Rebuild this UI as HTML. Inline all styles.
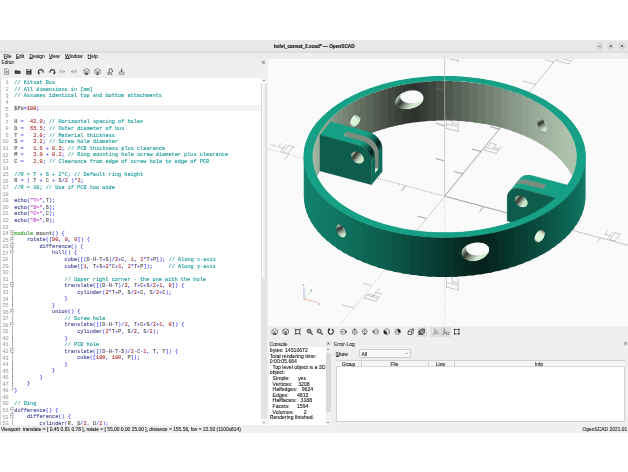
<!DOCTYPE html><html><head><meta charset="utf-8"><style>
*{margin:0;padding:0}
body{width:628px;height:472px;position:relative;overflow:hidden;background:#fff;font-family:"Liberation Sans",sans-serif}
.a{position:absolute}
.ui{margin-top:0.9px;font-size:4.9px;color:#161616;white-space:pre;position:absolute;line-height:6px;-webkit-text-stroke:0.09px #161616}
.ln{position:absolute;left:0;width:8.6px;text-align:right;font:5.8px "Liberation Mono",monospace;color:#9a9a9a;line-height:6.55px;margin-top:0.4px;letter-spacing:-0.25px;transform-origin:0 50%}
.code{position:absolute;left:14.3px;font:5.24px "Liberation Mono",monospace;white-space:pre;line-height:6.55px;color:#505050;-webkit-text-stroke:0.12px currentColor;transform:scaleY(1.13);transform-origin:0 50%}
.con{position:absolute;left:269.8px;font:5.15px "Liberation Sans",sans-serif;white-space:pre;line-height:5.8px;color:#1a1a1a;-webkit-text-stroke:0.1px #1a1a1a}
</style></head><body><div style="position:absolute;left:0;top:0;width:628px;height:472px;will-change:transform">
<div class="a" style="left:0;top:39.85px;width:628px;height:11.05px;background:#e8e8e8"></div>
<div class="a" style="left:0;top:50.9px;width:628px;height:1.9px;background:#dedede"></div>
<div class="ui" style="left:273.7px;top:43px;font-weight:bold;font-size:4.75px;color:#2a2a2a;-webkit-text-stroke:0.22px #2a2a2a">holvi_cansat_2.scad* — OpenSCAD</div>
<div class="a" style="left:596.1px;top:42.3px;width:7.4px;height:7.4px;border-radius:50%;background:#d9d9d9"></div>
<div class="a" style="left:607.1px;top:42.3px;width:7.4px;height:7.4px;border-radius:50%;background:#d9d9d9"></div>
<div class="a" style="left:618.4px;top:42.3px;width:7.4px;height:7.4px;border-radius:50%;background:#d9d9d9"></div>
<svg class="a" style="left:596px;top:42px" width="30" height="8" viewBox="0 0 30 8"><path d="M2.6,4.3h2.4" stroke="#606060" stroke-width="0.7"/><path d="M14.8,2.9l1.3,1.3l-1.3,1.3l-1.3-1.3z" fill="#5a5a5a"/><path d="M25.1,3.1l2,2M27.1,3.1l-2,2" stroke="#505050" stroke-width="0.8"/></svg>
<div class="a" style="left:0;top:52.8px;width:628px;height:380.2px;background:#efefef"></div>
<div class="a" style="left:0;top:52.8px;width:628px;height:6.3px;background:#ededed"></div>
<div class="ui" style="left:3.5px;top:52.8px">File</div>
<div class="a" style="left:3.5px;top:58.3px;width:3.0px;height:0.45px;background:#444"></div>
<div class="ui" style="left:15.8px;top:52.8px">Edit</div>
<div class="a" style="left:15.8px;top:58.3px;width:3.3px;height:0.45px;background:#444"></div>
<div class="ui" style="left:29.4px;top:52.8px">Design</div>
<div class="a" style="left:29.4px;top:58.3px;width:3.5px;height:0.45px;background:#444"></div>
<div class="ui" style="left:49.0px;top:52.8px">View</div>
<div class="a" style="left:49.0px;top:58.3px;width:3.3px;height:0.45px;background:#444"></div>
<div class="ui" style="left:65.1px;top:52.8px">Window</div>
<div class="a" style="left:65.1px;top:58.3px;width:4.6px;height:0.45px;background:#444"></div>
<div class="ui" style="left:87.6px;top:52.8px">Help</div>
<div class="a" style="left:87.6px;top:58.3px;width:3.5px;height:0.45px;background:#444"></div>
<div class="ui" style="left:1.4px;top:59.6px;color:#444">Editor</div>
<svg class="a" style="left:3.00px;top:68.30px" width="7.20" height="7.20" viewBox="0 0 10 10"><path d="M2.2,1.2h4l1.8,1.8v5.8h-5.8z" fill="none" stroke="#777" stroke-width="1"/><path d="M4,5.5h2.5M5.25,4.2v2.6" stroke="#444" stroke-width="1"/></svg><svg class="a" style="left:13.50px;top:68.30px" width="7.20" height="7.20" viewBox="0 0 10 10"><path d="M1,3h3l0.8,0.9h4v4.6h-7.8z" fill="#2e2e2e"/><path d="M2.5,5h7l-1.2,3.5h-7z" fill="#4a4a4a"/></svg><svg class="a" style="left:24.70px;top:68.30px" width="7.20" height="7.20" viewBox="0 0 10 10"><path d="M1.8,1.8h6.4l0.8,0.8v6.6h-7.2z" fill="#303030"/><rect x="3.2" y="2" width="3.6" height="2.2" fill="#ddd"/><rect x="3" y="6" width="4" height="3" fill="#777"/></svg><svg class="a" style="left:37.40px;top:68.30px" width="7.20" height="7.20" viewBox="0 0 10 10"><path d="M2.5,7.5 A3.4,3.4 0 1 1 8.6,6.6" fill="none" stroke="#2e2e2e" stroke-width="1.5"/><path d="M0.6,6.3l2.2,2.6l2.1-2.4z" fill="#2e2e2e"/></svg><svg class="a" style="left:48.60px;top:68.30px" width="7.20" height="7.20" viewBox="0 0 10 10"><path d="M7.5,7.5 A3.4,3.4 0 1 0 1.4,6.6" fill="none" stroke="#2e2e2e" stroke-width="1.5"/><path d="M9.4,6.3l-2.2,2.6l-2.1-2.4z" fill="#2e2e2e"/></svg><svg class="a" style="left:59.20px;top:68.30px" width="7.20" height="7.20" viewBox="0 0 10 10"><path d="M0.8,3.2h4M0.8,5h4M0.8,6.8h4" stroke="#9a9a9a" stroke-width="0.9"/><path d="M6,2.8l3,2.2l-3,2.2z" fill="#9a9a9a"/></svg><svg class="a" style="left:70.30px;top:68.30px" width="7.20" height="7.20" viewBox="0 0 10 10"><path d="M5.2,3.2h4M5.2,5h4M5.2,6.8h4" stroke="#9a9a9a" stroke-width="0.9"/><path d="M4,2.8l-3,2.2l3,2.2z" fill="#9a9a9a"/></svg><svg class="a" style="left:83.30px;top:68.30px" width="7.20" height="7.20" viewBox="0 0 10 10"><path d="M5,0.8l3.8,2.1v4.2l-3.8,2.1l-3.8-2.1v-4.2z" fill="none" stroke="#6a6a6a" stroke-width="0.9"/><path d="M1.2,2.9l3.8,2.1l3.8-2.1M5,5v4.2" fill="none" stroke="#6a6a6a" stroke-width="0.8"/><path d="M2.6,6.4l2,1.6l-2,1.6M5,6.4l2,1.6l-2,1.6" fill="none" stroke="#1e1e1e" stroke-width="1.1"/></svg><svg class="a" style="left:94.00px;top:68.30px" width="7.20" height="7.20" viewBox="0 0 10 10"><path d="M5,0.8l3.8,2.1v4.2l-3.8,2.1l-3.8-2.1v-4.2z" fill="none" stroke="#6a6a6a" stroke-width="0.9"/><path d="M1.2,2.9l3.8,2.1l3.8-2.1M5,5v4.2" fill="none" stroke="#6a6a6a" stroke-width="0.8"/><path d="M3.5,6h3l-3,3.4h3z" fill="none" stroke="#333" stroke-width="0.8"/></svg><svg class="a" style="left:107.10px;top:68.30px" width="7.20" height="7.20" viewBox="0 0 10 10"><path d="M3,5.5V3.2A2.2,2.2 0 0 1 7.4,3.2V5.5" fill="none" stroke="#2e2e2e" stroke-width="1"/><path d="M6.6,4.6l0.8,1.2l0.8-1.2" fill="#2e2e2e"/><text x="0.6" y="9.6" font-family="Liberation Sans" font-weight="bold" font-size="3.6" fill="#2e2e2e">STL</text></svg><svg class="a" style="left:117.50px;top:68.30px" width="7.20" height="7.20" viewBox="0 0 10 10"><path d="M5,0.8v4.2" stroke="#2e2e2e" stroke-width="1.1"/><path d="M3.4,3.4l1.6,1.8l1.6-1.8z" fill="#2e2e2e"/><path d="M1.8,5.5h6.4v3.5h-6.4z" fill="none" stroke="#666" stroke-width="0.8"/><path d="M1.8,7h6.4" stroke="#666" stroke-width="0.6"/></svg>
<svg class="a" style="left:261.10px;top:59.90px" width="5" height="5" viewBox="0 0 10 10"><rect x="1" y="1" width="8" height="8" rx="1.5" fill="#d4d4d4"/><path d="M3,3L7,7M7,3L3,7" stroke="#555" stroke-width="1.3"/></svg>
<div class="a" style="left:0;top:78.2px;width:261px;height:346.8px;background:#fff;overflow:hidden">
<div class="a" style="left:0;top:0;width:0.8px;height:347px;background:#d8d8d8"></div>
<div style="position:absolute;left:0;top:-78.2px"><div style="position:absolute;left:14px;top:104.8px;width:247px;height:6px;background:#f3f3f3"></div>
<div class="ln" style="top:80.10px">1</div>
<div class="code" style="top:80.10px"><span style="color:#1e9c9c">// Kitsat Bus</span></div>
<div class="ln" style="top:86.65px">2</div>
<div class="code" style="top:86.65px"><span style="color:#1e9c9c">// All dimensions in [mm]</span></div>
<div class="ln" style="top:93.20px">3</div>
<div class="code" style="top:93.20px"><span style="color:#1e9c9c">// Assumes identical top and bottom attachments</span></div>
<div class="ln" style="top:99.75px">4</div>
<div class="code" style="top:99.75px"></div>
<div class="ln" style="top:106.30px">5</div>
<div class="code" style="top:106.30px"><span style="color:#505050">$fn</span><span style="color:#4b4bff">=</span><span style="color:#b03a3a">100</span><span style="color:#4b4bff">;</span></div>
<div class="ln" style="top:112.85px">6</div>
<div class="code" style="top:112.85px"></div>
<div class="ln" style="top:119.40px">7</div>
<div class="code" style="top:119.40px"><span style="color:#505050">H</span> <span style="color:#4b4bff">=</span>  <span style="color:#b03a3a">42.0</span><span style="color:#4b4bff">;</span> <span style="color:#1e9c9c">// Horizontal spacing of holes</span></div>
<div class="ln" style="top:125.95px">8</div>
<div class="code" style="top:125.95px"><span style="color:#505050">D</span> <span style="color:#4b4bff">=</span>  <span style="color:#b03a3a">65.5</span><span style="color:#4b4bff">;</span> <span style="color:#1e9c9c">// Outer diameter of bus</span></div>
<div class="ln" style="top:132.50px">9</div>
<div class="code" style="top:132.50px"><span style="color:#505050">T</span> <span style="color:#4b4bff">=</span>   <span style="color:#b03a3a">2.0</span><span style="color:#4b4bff">;</span> <span style="color:#1e9c9c">// Material thickness</span></div>
<div class="ln" style="top:139.05px">10</div>
<div class="code" style="top:139.05px"><span style="color:#505050">S</span> <span style="color:#4b4bff">=</span>   <span style="color:#b03a3a">3.2</span><span style="color:#4b4bff">;</span> <span style="color:#1e9c9c">// Screw hole diameter</span></div>
<div class="ln" style="top:145.60px">11</div>
<div class="code" style="top:145.60px"><span style="color:#505050">P</span> <span style="color:#4b4bff">=</span>   <span style="color:#b03a3a">1.6</span> <span style="color:#4b4bff">+</span> <span style="color:#b03a3a">0.3</span><span style="color:#4b4bff">;</span> <span style="color:#1e9c9c">// PCB thickness plus clearance</span></div>
<div class="ln" style="top:152.15px">12</div>
<div class="code" style="top:152.15px"><span style="color:#505050">M</span> <span style="color:#4b4bff">=</span>   <span style="color:#b03a3a">3.0</span> <span style="color:#4b4bff">+</span> <span style="color:#b03a3a">0.2</span><span style="color:#4b4bff">;</span> <span style="color:#1e9c9c">// Ring mounting hole screw diameter plus clearance</span></div>
<div class="ln" style="top:158.70px">13</div>
<div class="code" style="top:158.70px"><span style="color:#505050">C</span> <span style="color:#4b4bff">=</span>   <span style="color:#b03a3a">2.0</span><span style="color:#4b4bff">;</span> <span style="color:#1e9c9c">// Clearance from edge of screw hole to edge of PCB</span></div>
<div class="ln" style="top:165.25px">14</div>
<div class="code" style="top:165.25px"></div>
<div class="ln" style="top:171.80px">15</div>
<div class="code" style="top:171.80px"><span style="color:#1e9c9c">//R = T + S + 2*C; // Default ring height</span></div>
<div class="ln" style="top:178.35px">16</div>
<div class="code" style="top:178.35px"><span style="color:#505050">R</span> <span style="color:#4b4bff">=</span> <span style="color:#4b4bff">(</span> <span style="color:#505050">T</span> <span style="color:#4b4bff">+</span> <span style="color:#505050">C</span> <span style="color:#4b4bff">+</span> <span style="color:#505050">S</span><span style="color:#4b4bff">/</span><span style="color:#b03a3a">2</span> <span style="color:#4b4bff">)</span><span style="color:#4b4bff">*</span><span style="color:#b03a3a">2</span><span style="color:#4b4bff">;</span></div>
<div class="ln" style="top:184.90px">17</div>
<div class="code" style="top:184.90px"><span style="color:#1e9c9c">//R = 10; // Use if PCB too wide</span></div>
<div class="ln" style="top:191.45px">18</div>
<div class="code" style="top:191.45px"></div>
<div class="ln" style="top:198.00px">19</div>
<div class="code" style="top:198.00px"><span style="color:#4b4b9b">echo</span><span style="color:#4b4bff">(</span><span style="color:#c040c0">&quot;T=&quot;</span><span style="color:#4b4bff">,</span><span style="color:#505050">T</span><span style="color:#4b4bff">)</span><span style="color:#4b4bff">;</span></div>
<div class="ln" style="top:204.55px">20</div>
<div class="code" style="top:204.55px"><span style="color:#4b4b9b">echo</span><span style="color:#4b4bff">(</span><span style="color:#c040c0">&quot;S=&quot;</span><span style="color:#4b4bff">,</span><span style="color:#505050">S</span><span style="color:#4b4bff">)</span><span style="color:#4b4bff">;</span></div>
<div class="ln" style="top:211.10px">21</div>
<div class="code" style="top:211.10px"><span style="color:#4b4b9b">echo</span><span style="color:#4b4bff">(</span><span style="color:#c040c0">&quot;C=&quot;</span><span style="color:#4b4bff">,</span><span style="color:#505050">C</span><span style="color:#4b4bff">)</span><span style="color:#4b4bff">;</span></div>
<div class="ln" style="top:217.65px">22</div>
<div class="code" style="top:217.65px"><span style="color:#4b4b9b">echo</span><span style="color:#4b4bff">(</span><span style="color:#c040c0">&quot;R=&quot;</span><span style="color:#4b4bff">,</span><span style="color:#505050">R</span><span style="color:#4b4bff">)</span><span style="color:#4b4bff">;</span></div>
<div class="ln" style="top:224.20px">23</div>
<div class="code" style="top:224.20px"></div>
<div class="ln" style="top:230.75px">24</div>
<div class="code" style="top:230.75px"><span style="color:#3aa33a">module</span> <span style="color:#505050">mount</span><span style="color:#4b4bff">(</span><span style="color:#4b4bff">)</span> <span style="color:#4b4bff">{</span></div>
<div class="ln" style="top:237.30px">25</div>
<div class="code" style="top:237.30px">    <span style="color:#4b4b9b">rotate</span><span style="color:#4b4bff">(</span><span style="color:#4b4bff">[</span><span style="color:#b03a3a">90</span><span style="color:#4b4bff">,</span> <span style="color:#b03a3a">0</span><span style="color:#4b4bff">,</span> <span style="color:#b03a3a">0</span><span style="color:#4b4bff">]</span><span style="color:#4b4bff">)</span> <span style="color:#4b4bff">{</span></div>
<div class="ln" style="top:243.85px">26</div>
<div class="code" style="top:243.85px">        <span style="color:#4b4b9b">difference</span><span style="color:#4b4bff">(</span><span style="color:#4b4bff">)</span> <span style="color:#4b4bff">{</span></div>
<div class="ln" style="top:250.40px">27</div>
<div class="code" style="top:250.40px">            <span style="color:#4b4b9b">hull</span><span style="color:#4b4bff">(</span><span style="color:#4b4bff">)</span> <span style="color:#4b4bff">{</span></div>
<div class="ln" style="top:256.95px">28</div>
<div class="code" style="top:256.95px">                <span style="color:#4b4b9b">cube</span><span style="color:#4b4bff">(</span><span style="color:#4b4bff">[</span><span style="color:#4b4bff">(</span><span style="color:#505050">D</span><span style="color:#4b4bff">-</span><span style="color:#505050">H</span><span style="color:#4b4bff">-</span><span style="color:#505050">T</span><span style="color:#4b4bff">+</span><span style="color:#505050">S</span><span style="color:#4b4bff">)</span><span style="color:#4b4bff">/</span><span style="color:#b03a3a">2</span><span style="color:#4b4bff">+</span><span style="color:#505050">C</span><span style="color:#4b4bff">,</span> <span style="color:#b03a3a">1</span><span style="color:#4b4bff">,</span> <span style="color:#b03a3a">2</span><span style="color:#4b4bff">*</span><span style="color:#505050">T</span><span style="color:#4b4bff">+</span><span style="color:#505050">P</span><span style="color:#4b4bff">]</span><span style="color:#4b4bff">)</span><span style="color:#4b4bff">;</span> <span style="color:#1e9c9c">// Along x-axis</span></div>
<div class="ln" style="top:263.50px">29</div>
<div class="code" style="top:263.50px">                <span style="color:#4b4b9b">cube</span><span style="color:#4b4bff">(</span><span style="color:#4b4bff">[</span><span style="color:#b03a3a">1</span><span style="color:#4b4bff">,</span> <span style="color:#505050">T</span><span style="color:#4b4bff">+</span><span style="color:#505050">S</span><span style="color:#4b4bff">+</span><span style="color:#b03a3a">2</span><span style="color:#4b4bff">*</span><span style="color:#505050">C</span><span style="color:#4b4bff">+</span><span style="color:#b03a3a">1</span><span style="color:#4b4bff">,</span> <span style="color:#b03a3a">2</span><span style="color:#4b4bff">*</span><span style="color:#505050">T</span><span style="color:#4b4bff">+</span><span style="color:#505050">P</span><span style="color:#4b4bff">]</span><span style="color:#4b4bff">)</span><span style="color:#4b4bff">;</span>     <span style="color:#1e9c9c">// Along y-axis</span></div>
<div class="ln" style="top:270.05px">30</div>
<div class="code" style="top:270.05px"></div>
<div class="ln" style="top:276.60px">31</div>
<div class="code" style="top:276.60px">                <span style="color:#1e9c9c">// Upper right corner - the one with the hole</span></div>
<div class="ln" style="top:283.15px">32</div>
<div class="code" style="top:283.15px">                <span style="color:#4b4b9b">translate</span><span style="color:#4b4bff">(</span><span style="color:#4b4bff">[</span><span style="color:#4b4bff">(</span><span style="color:#505050">D</span><span style="color:#4b4bff">-</span><span style="color:#505050">H</span><span style="color:#4b4bff">-</span><span style="color:#505050">T</span><span style="color:#4b4bff">)</span><span style="color:#4b4bff">/</span><span style="color:#b03a3a">2</span><span style="color:#4b4bff">,</span> <span style="color:#505050">T</span><span style="color:#4b4bff">+</span><span style="color:#505050">C</span><span style="color:#4b4bff">+</span><span style="color:#505050">S</span><span style="color:#4b4bff">/</span><span style="color:#b03a3a">2</span><span style="color:#4b4bff">+</span><span style="color:#b03a3a">1</span><span style="color:#4b4bff">,</span> <span style="color:#b03a3a">0</span><span style="color:#4b4bff">]</span><span style="color:#4b4bff">)</span> <span style="color:#4b4bff">{</span></div>
<div class="ln" style="top:289.70px">33</div>
<div class="code" style="top:289.70px">                    <span style="color:#4b4b9b">cylinder</span><span style="color:#4b4bff">(</span><span style="color:#b03a3a">2</span><span style="color:#4b4bff">*</span><span style="color:#505050">T</span><span style="color:#4b4bff">+</span><span style="color:#505050">P</span><span style="color:#4b4bff">,</span> <span style="color:#505050">S</span><span style="color:#4b4bff">/</span><span style="color:#b03a3a">2</span><span style="color:#4b4bff">+</span><span style="color:#505050">C</span><span style="color:#4b4bff">,</span> <span style="color:#505050">S</span><span style="color:#4b4bff">/</span><span style="color:#b03a3a">2</span><span style="color:#4b4bff">+</span><span style="color:#505050">C</span><span style="color:#4b4bff">)</span><span style="color:#4b4bff">;</span></div>
<div class="ln" style="top:296.25px">34</div>
<div class="code" style="top:296.25px">                <span style="color:#4b4bff">}</span></div>
<div class="ln" style="top:302.80px">35</div>
<div class="code" style="top:302.80px">            <span style="color:#4b4bff">}</span></div>
<div class="ln" style="top:309.35px">36</div>
<div class="code" style="top:309.35px">            <span style="color:#4b4b9b">union</span><span style="color:#4b4bff">(</span><span style="color:#4b4bff">)</span> <span style="color:#4b4bff">{</span></div>
<div class="ln" style="top:315.90px">37</div>
<div class="code" style="top:315.90px">                <span style="color:#1e9c9c">// Screw hole</span></div>
<div class="ln" style="top:322.45px">38</div>
<div class="code" style="top:322.45px">                <span style="color:#4b4b9b">translate</span><span style="color:#4b4bff">(</span><span style="color:#4b4bff">[</span><span style="color:#4b4bff">(</span><span style="color:#505050">D</span><span style="color:#4b4bff">-</span><span style="color:#505050">H</span><span style="color:#4b4bff">-</span><span style="color:#505050">T</span><span style="color:#4b4bff">)</span><span style="color:#4b4bff">/</span><span style="color:#b03a3a">2</span><span style="color:#4b4bff">,</span> <span style="color:#505050">T</span><span style="color:#4b4bff">+</span><span style="color:#505050">C</span><span style="color:#4b4bff">+</span><span style="color:#505050">S</span><span style="color:#4b4bff">/</span><span style="color:#b03a3a">2</span><span style="color:#4b4bff">+</span><span style="color:#b03a3a">1</span><span style="color:#4b4bff">,</span> <span style="color:#b03a3a">0</span><span style="color:#4b4bff">]</span><span style="color:#4b4bff">)</span> <span style="color:#4b4bff">{</span></div>
<div class="ln" style="top:329.00px">39</div>
<div class="code" style="top:329.00px">                    <span style="color:#4b4b9b">cylinder</span><span style="color:#4b4bff">(</span><span style="color:#b03a3a">2</span><span style="color:#4b4bff">*</span><span style="color:#505050">T</span><span style="color:#4b4bff">+</span><span style="color:#505050">P</span><span style="color:#4b4bff">,</span> <span style="color:#505050">S</span><span style="color:#4b4bff">/</span><span style="color:#b03a3a">2</span><span style="color:#4b4bff">,</span> <span style="color:#505050">S</span><span style="color:#4b4bff">/</span><span style="color:#b03a3a">2</span><span style="color:#4b4bff">)</span><span style="color:#4b4bff">;</span></div>
<div class="ln" style="top:335.55px">40</div>
<div class="code" style="top:335.55px">                <span style="color:#4b4bff">}</span></div>
<div class="ln" style="top:342.10px">41</div>
<div class="code" style="top:342.10px">                <span style="color:#1e9c9c">// PCB hole</span></div>
<div class="ln" style="top:348.65px">42</div>
<div class="code" style="top:348.65px">                <span style="color:#4b4b9b">translate</span><span style="color:#4b4bff">(</span><span style="color:#4b4bff">[</span><span style="color:#4b4bff">(</span><span style="color:#505050">D</span><span style="color:#4b4bff">-</span><span style="color:#505050">H</span><span style="color:#4b4bff">-</span><span style="color:#505050">T</span><span style="color:#4b4bff">-</span><span style="color:#505050">S</span><span style="color:#4b4bff">)</span><span style="color:#4b4bff">/</span><span style="color:#b03a3a">2</span><span style="color:#4b4bff">-</span><span style="color:#505050">C</span><span style="color:#4b4bff">-</span><span style="color:#b03a3a">1</span><span style="color:#4b4bff">,</span> <span style="color:#505050">T</span><span style="color:#4b4bff">,</span> <span style="color:#505050">T</span><span style="color:#4b4bff">]</span><span style="color:#4b4bff">)</span> <span style="color:#4b4bff">{</span></div>
<div class="ln" style="top:355.20px">43</div>
<div class="code" style="top:355.20px">                    <span style="color:#4b4b9b">cube</span><span style="color:#4b4bff">(</span><span style="color:#4b4bff">[</span><span style="color:#b03a3a">100</span><span style="color:#4b4bff">,</span> <span style="color:#b03a3a">100</span><span style="color:#4b4bff">,</span> <span style="color:#505050">P</span><span style="color:#4b4bff">]</span><span style="color:#4b4bff">)</span><span style="color:#4b4bff">;</span></div>
<div class="ln" style="top:361.75px">44</div>
<div class="code" style="top:361.75px">                <span style="color:#4b4bff">}</span></div>
<div class="ln" style="top:368.30px">45</div>
<div class="code" style="top:368.30px">            <span style="color:#4b4bff">}</span></div>
<div class="ln" style="top:374.85px">46</div>
<div class="code" style="top:374.85px">        <span style="color:#4b4bff">}</span></div>
<div class="ln" style="top:381.40px">47</div>
<div class="code" style="top:381.40px">    <span style="color:#4b4bff">}</span></div>
<div class="ln" style="top:387.95px">48</div>
<div class="code" style="top:387.95px"><span style="color:#4b4bff">}</span></div>
<div class="ln" style="top:394.50px">49</div>
<div class="code" style="top:394.50px"></div>
<div class="ln" style="top:401.05px">50</div>
<div class="code" style="top:401.05px"><span style="color:#1e9c9c">// Ring</span></div>
<div class="ln" style="top:407.60px">51</div>
<div class="code" style="top:407.60px"><span style="color:#4b4b9b">difference</span><span style="color:#4b4bff">(</span><span style="color:#4b4bff">)</span> <span style="color:#4b4bff">{</span></div>
<div class="ln" style="top:414.15px">52</div>
<div class="code" style="top:414.15px">    <span style="color:#4b4b9b">difference</span><span style="color:#4b4bff">(</span><span style="color:#4b4bff">)</span> <span style="color:#4b4bff">{</span></div>
<div class="ln" style="top:420.70px">53</div>
<div class="code" style="top:420.70px">        <span style="color:#4b4b9b">cylinder</span><span style="color:#4b4bff">(</span><span style="color:#505050">R</span><span style="color:#4b4bff">,</span> <span style="color:#505050">D</span><span style="color:#4b4bff">/</span><span style="color:#b03a3a">2</span><span style="color:#4b4bff">,</span> <span style="color:#505050">D</span><span style="color:#4b4bff">/</span><span style="color:#b03a3a">2</span><span style="color:#4b4bff">)</span><span style="color:#4b4bff">;</span></div>
<div style="position:absolute;left:11.5px;top:232.26px;width:0.9px;height:158.10px;background:#b4b4b4"></div>
<div style="position:absolute;left:11.5px;top:409.00px;width:0.9px;height:19.64px;background:#bdbdbd"></div>
<svg style="position:absolute;left:9.7px;top:229.96px" width="4.6" height="4.8" viewBox="0 0 46 48"><rect x="4" y="4" width="38" height="40" rx="7" fill="#fafafa" stroke="#8a8a8a" stroke-width="6"/><path d="M13,24H33" stroke="#6a6a6a" stroke-width="6"/></svg>
<svg style="position:absolute;left:9.7px;top:236.50px" width="4.6" height="4.8" viewBox="0 0 46 48"><rect x="4" y="4" width="38" height="40" rx="7" fill="#fafafa" stroke="#8a8a8a" stroke-width="6"/><path d="M13,24H33" stroke="#6a6a6a" stroke-width="6"/></svg>
<svg style="position:absolute;left:9.7px;top:243.05px" width="4.6" height="4.8" viewBox="0 0 46 48"><rect x="4" y="4" width="38" height="40" rx="7" fill="#fafafa" stroke="#8a8a8a" stroke-width="6"/><path d="M13,24H33" stroke="#6a6a6a" stroke-width="6"/></svg>
<svg style="position:absolute;left:9.7px;top:249.60px" width="4.6" height="4.8" viewBox="0 0 46 48"><rect x="4" y="4" width="38" height="40" rx="7" fill="#fafafa" stroke="#8a8a8a" stroke-width="6"/><path d="M13,24H33" stroke="#6a6a6a" stroke-width="6"/></svg>
<svg style="position:absolute;left:9.7px;top:282.33px" width="4.6" height="4.8" viewBox="0 0 46 48"><rect x="4" y="4" width="38" height="40" rx="7" fill="#fafafa" stroke="#8a8a8a" stroke-width="6"/><path d="M13,24H33" stroke="#6a6a6a" stroke-width="6"/></svg>
<svg style="position:absolute;left:9.7px;top:308.51px" width="4.6" height="4.8" viewBox="0 0 46 48"><rect x="4" y="4" width="38" height="40" rx="7" fill="#fafafa" stroke="#8a8a8a" stroke-width="6"/><path d="M13,24H33" stroke="#6a6a6a" stroke-width="6"/></svg>
<svg style="position:absolute;left:9.7px;top:321.60px" width="4.6" height="4.8" viewBox="0 0 46 48"><rect x="4" y="4" width="38" height="40" rx="7" fill="#fafafa" stroke="#8a8a8a" stroke-width="6"/><path d="M13,24H33" stroke="#6a6a6a" stroke-width="6"/></svg>
<svg style="position:absolute;left:9.7px;top:347.79px" width="4.6" height="4.8" viewBox="0 0 46 48"><rect x="4" y="4" width="38" height="40" rx="7" fill="#fafafa" stroke="#8a8a8a" stroke-width="6"/><path d="M13,24H33" stroke="#6a6a6a" stroke-width="6"/></svg>
<svg style="position:absolute;left:9.7px;top:406.70px" width="4.6" height="4.8" viewBox="0 0 46 48"><rect x="4" y="4" width="38" height="40" rx="7" fill="#fafafa" stroke="#8a8a8a" stroke-width="6"/><path d="M13,24H33" stroke="#6a6a6a" stroke-width="6"/></svg>
<svg style="position:absolute;left:9.7px;top:413.25px" width="4.6" height="4.8" viewBox="0 0 46 48"><rect x="4" y="4" width="38" height="40" rx="7" fill="#fafafa" stroke="#8a8a8a" stroke-width="6"/><path d="M13,24H33" stroke="#6a6a6a" stroke-width="6"/></svg>
<div style="position:absolute;left:11.9px;top:297.42px;width:1.5px;height:0.8px;background:#777"></div>
<div style="position:absolute;left:11.9px;top:303.96px;width:1.5px;height:0.8px;background:#777"></div>
<div style="position:absolute;left:11.9px;top:336.69px;width:1.5px;height:0.8px;background:#777"></div>
<div style="position:absolute;left:11.9px;top:362.88px;width:1.5px;height:0.8px;background:#777"></div>
<div style="position:absolute;left:11.9px;top:369.42px;width:1.5px;height:0.8px;background:#777"></div>
<div style="position:absolute;left:11.9px;top:375.97px;width:1.5px;height:0.8px;background:#777"></div>
<div style="position:absolute;left:11.9px;top:382.52px;width:1.5px;height:0.8px;background:#777"></div>
<div style="position:absolute;left:11.9px;top:389.06px;width:1.5px;height:0.8px;background:#777"></div></div>
</div>
<div class="a" style="left:261px;top:78.2px;width:5.7px;height:346.8px;background:#e3e3e3"></div>
<div class="a" style="left:261.3px;top:84px;width:5.1px;height:194px;background:#f6f6f6;border-left:0.5px solid #dadada;border-right:0.5px solid #dadada;box-sizing:border-box"></div>
<div class="a" style="left:261px;top:78.2px;width:5.7px;height:5.6px;background:#f4f4f4"></div>
<div class="a" style="left:261px;top:419.4px;width:5.7px;height:5.6px;background:#f4f4f4"></div>
<div class="a" style="left:262.65px;top:80.20px;width:0;height:0;border-left:1.2px solid transparent;border-right:1.2px solid transparent;border-bottom:1.4px solid #333"></div>
<div class="a" style="left:262.65px;top:421.60px;width:0;height:0;border-left:1.2px solid transparent;border-right:1.2px solid transparent;border-top:1.4px solid #333"></div>
<div class="a" style="left:267.9px;top:59.3px;width:360.1px;height:266.8px;background:#fafafa;overflow:hidden"><svg width="360" height="267" viewBox="0 0 360 267" style="position:absolute;left:0;top:0"><defs><clipPath id="c1"><polygon points="155.44,39.06 155.32,37.87 154.98,36.73 154.42,35.65 153.64,34.65 152.66,33.76 151.49,32.98 150.15,32.34 148.67,31.86 147.05,31.53 145.33,31.38 143.54,31.41 141.70,31.61 139.84,31.99 138.01,32.54 136.21,33.24 134.50,34.10 132.91,35.08 131.45,36.17 130.16,37.34 129.07,38.57 128.20,39.84 127.56,41.12 127.18,42.39 127.05,43.61 127.18,44.78 127.56,45.87 128.20,46.86 129.07,47.74 130.16,48.49 131.45,49.12 132.91,49.62 134.50,49.97 136.21,50.17 138.01,50.24 139.84,50.16 141.70,49.94 143.54,49.58 145.33,49.08 147.05,48.47 148.67,47.73 150.15,46.88 151.49,45.94 152.66,44.91 153.64,43.81 154.42,42.66 154.98,41.47 155.32,40.26"/></clipPath><clipPath id="c2"><polygon points="82.34,64.28 82.38,63.52 82.50,62.72 82.71,61.90 82.99,61.08 83.34,60.26 83.76,59.47 84.25,58.71 84.79,58.00 85.37,57.36 85.99,56.78 86.63,56.29 87.29,55.90 87.96,55.60 88.61,55.40 89.25,55.31 89.86,55.34 90.43,55.46 90.94,55.70 91.39,56.03 91.78,56.46 92.08,56.98 92.31,57.57 92.44,58.23 92.49,58.94 92.44,59.70 92.31,60.49 92.08,61.29 91.78,62.10 91.39,62.90 90.94,63.67 90.43,64.41 89.86,65.10 89.25,65.73 88.61,66.29 87.96,66.78 87.29,67.17 86.63,67.47 85.99,67.68 85.37,67.78 84.79,67.77 84.25,67.66 83.76,67.44 83.34,67.13 82.99,66.72 82.71,66.22 82.50,65.64 82.38,64.99"/></clipPath><clipPath id="c3"><polygon points="269.42,63.37 269.46,62.66 269.59,62.01 269.80,61.43 270.08,60.93 270.43,60.52 270.85,60.20 271.33,59.99 271.85,59.89 272.41,59.90 272.99,60.02 273.60,60.25 274.21,60.58 274.81,61.01 275.40,61.53 275.97,62.13 276.50,62.80 276.99,63.54 277.43,64.32 277.81,65.14 278.13,65.97 278.39,66.81 278.57,67.63 278.69,68.43 278.72,69.19 278.69,69.90 278.57,70.55 278.39,71.12 278.13,71.61 277.81,72.00 277.43,72.29 276.99,72.49 276.50,72.57 275.97,72.55 275.40,72.42 274.81,72.19 274.21,71.85 273.60,71.43 272.99,70.91 272.41,70.32 271.85,69.66 271.33,68.94 270.85,68.18 270.43,67.38 270.08,66.57 269.80,65.74 269.59,64.93 269.46,64.13"/></clipPath><clipPath id="c4"><polygon points="75.12,76.69 93.06,81.49 94.44,81.92 95.80,82.47 97.13,83.13 98.43,83.89 99.68,84.76 100.86,85.72 101.96,86.75 102.98,87.86 103.91,89.03 104.73,90.25 105.44,91.51 106.03,92.79 106.49,94.09 106.83,95.39 107.03,96.67 107.10,97.93 107.10,114.14 110.55,109.89 110.55,93.68 110.48,92.42 110.28,91.14 109.95,89.84 109.48,88.54 108.89,87.26 108.19,86.00 107.36,84.78 106.44,83.61 105.42,82.50 104.31,81.47 103.13,80.51 101.89,79.64 100.59,78.88 99.25,78.22 97.89,77.67 96.51,77.24 78.58,72.45"/></clipPath><clipPath id="c5"><polygon points="95.66,100.32 95.58,99.42 95.36,98.50 94.98,97.58 94.47,96.69 93.83,95.84 93.09,95.07 92.26,94.39 91.35,93.80 90.40,93.34 89.42,93.01 88.45,92.82 87.50,92.77 86.59,92.87 85.76,93.11 85.01,93.48 84.38,93.99 83.86,94.60 83.49,95.32 83.26,96.12 83.18,96.98 83.26,97.89 83.49,98.81 83.86,99.72 84.38,100.62 85.01,101.46 85.76,102.23 86.59,102.92 87.50,103.50 88.45,103.96 89.42,104.29 90.40,104.48 91.35,104.53 92.26,104.43 93.09,104.19 93.83,103.82 94.47,103.32 94.98,102.70 95.36,101.98 95.58,101.18"/></clipPath><clipPath id="c6"><polygon points="274.76,130.09 256.82,125.29 255.45,124.99 254.08,124.80 252.75,124.75 251.45,124.82 250.21,125.02 249.02,125.34 247.92,125.79 246.90,126.35 245.97,127.03 245.15,127.81 244.44,128.69 243.85,129.66 243.39,130.70 243.06,131.82 242.85,133.00 242.79,134.23 242.79,150.44 246.24,146.19 246.24,129.98 246.31,128.75 246.51,127.57 246.85,126.45 247.31,125.41 247.90,124.44 248.61,123.56 249.43,122.78 250.35,122.10 251.37,121.54 252.48,121.10 253.66,120.77 254.91,120.57 256.20,120.50 257.54,120.55 258.90,120.74 260.28,121.04 278.21,125.84"/></clipPath><clipPath id="c7"><polygon points="259.43,144.12 259.35,143.22 259.12,142.30 258.75,141.38 258.23,140.49 257.60,139.65 256.85,138.87 256.02,138.19 255.11,137.61 254.16,137.14 253.19,136.81 252.21,136.62 251.26,136.57 250.35,136.67 249.52,136.91 248.78,137.29 248.14,137.79 247.63,138.41 247.25,139.12 247.02,139.92 246.95,140.78 247.02,141.69 247.25,142.61 247.63,143.53 248.14,144.42 248.78,145.26 249.52,146.03 250.35,146.72 251.26,147.30 252.21,147.76 253.19,148.09 254.16,148.28 255.11,148.33 256.02,148.23 256.85,147.99 257.60,147.62 258.23,147.12 258.75,146.50 259.12,145.78 259.35,144.98"/></clipPath><clipPath id="c8"><polygon points="221.13,190.64 221.01,189.47 220.63,188.36 220.02,187.34 219.18,186.42 218.13,185.61 216.89,184.93 215.49,184.37 213.94,183.96 212.29,183.68 210.55,183.55 208.77,183.56 206.97,183.72 205.18,184.01 203.43,184.45 201.76,185.01 200.18,185.70 198.73,186.50 197.42,187.41 196.28,188.41 195.32,189.48 194.56,190.61 194.01,191.78 193.68,192.98 193.56,194.19 193.68,195.38 194.01,196.53 194.56,197.62 195.32,198.64 196.28,199.56 197.42,200.37 198.73,201.04 200.18,201.57 201.76,201.94 203.43,202.15 205.18,202.18 206.97,202.04 208.77,201.73 210.55,201.25 212.29,200.61 213.94,199.83 215.49,198.91 216.89,197.89 218.13,196.77 219.18,195.58 220.02,194.36 220.63,193.11 221.01,191.86"/></clipPath><clipPath id="c9"><polygon points="77.56,174.92 77.52,174.16 77.40,173.37 77.19,172.55 76.91,171.73 76.56,170.91 76.14,170.12 75.66,169.35 75.14,168.63 74.59,167.97 74.00,167.38 73.40,166.87 72.79,166.44 72.18,166.11 71.59,165.87 71.03,165.74 70.49,165.72 70.00,165.81 69.56,166.00 69.18,166.29 68.85,166.69 68.60,167.17 68.41,167.74 68.30,168.39 68.26,169.10 68.30,169.86 68.41,170.66 68.60,171.49 68.85,172.33 69.18,173.16 69.56,173.97 70.00,174.75 70.49,175.49 71.03,176.16 71.59,176.77 72.18,177.29 72.79,177.72 73.40,178.05 74.00,178.27 74.59,178.39 75.14,178.40 75.66,178.30 76.14,178.09 76.56,177.78 76.91,177.37 77.19,176.87 77.40,176.29 77.52,175.63"/></clipPath><clipPath id="c10"><polygon points="276.82,174.32 276.78,173.61 276.65,172.96 276.45,172.38 276.17,171.88 275.81,171.47 275.39,171.15 274.91,170.94 274.37,170.83 273.78,170.82 273.16,170.92 272.52,171.12 271.86,171.42 271.19,171.82 270.54,172.30 269.90,172.86 269.29,173.49 268.73,174.19 268.21,174.93 267.76,175.70 267.38,176.50 267.07,177.31 266.85,178.11 266.71,178.90 266.67,179.66 266.71,180.37 266.85,181.03 267.07,181.62 267.38,182.14 267.76,182.57 268.21,182.90 268.73,183.13 269.29,183.26 269.90,183.28 270.54,183.19 271.19,183.00 271.86,182.70 272.52,182.30 273.16,181.81 273.78,181.24 274.37,180.59 274.91,179.89 275.39,179.13 275.81,178.33 276.17,177.52 276.45,176.69 276.65,175.88 276.78,175.08"/></clipPath></defs><line x1="176.67" y1="137.21" x2="1736.32" y2="554.36" stroke="#808080" stroke-width="0.42"/>
<line x1="176.67" y1="137.21" x2="903.95" y2="-757.37" stroke="#808080" stroke-width="0.42"/>
<line x1="176.67" y1="137.21" x2="-1382.99" y2="-279.94" stroke="#808080" stroke-width="0.42" stroke-dasharray="1.0,1.2"/>
<line x1="176.67" y1="137.21" x2="-550.61" y2="1031.80" stroke="#808080" stroke-width="0.42" stroke-dasharray="1.0,1.2"/>
<line x1="215.66" y1="147.64" x2="211.48" y2="152.79" stroke="#808080" stroke-width="0.42"/>
<line x1="194.85" y1="114.85" x2="185.88" y2="112.45" stroke="#808080" stroke-width="0.42"/>
<line x1="137.68" y1="126.79" x2="133.50" y2="131.93" stroke="#808080" stroke-width="0.42"/>
<line x1="158.49" y1="159.58" x2="149.52" y2="157.18" stroke="#808080" stroke-width="0.42"/>
<line x1="176.67" y1="101.97" x2="167.70" y2="99.57" stroke="#808080" stroke-width="0.42"/>
<line x1="254.65" y1="158.07" x2="250.47" y2="163.22" stroke="#808080" stroke-width="0.42"/>
<line x1="213.03" y1="92.48" x2="204.06" y2="90.09" stroke="#808080" stroke-width="0.42"/>
<line x1="98.69" y1="116.36" x2="94.50" y2="121.50" stroke="#808080" stroke-width="0.42"/>
<line x1="140.30" y1="181.94" x2="131.34" y2="179.54" stroke="#808080" stroke-width="0.42"/>
<line x1="176.67" y1="66.73" x2="167.70" y2="64.33" stroke="#808080" stroke-width="0.42"/>
<line x1="293.64" y1="168.50" x2="289.46" y2="173.64" stroke="#808080" stroke-width="0.42"/>
<line x1="231.21" y1="70.12" x2="222.25" y2="67.72" stroke="#808080" stroke-width="0.42"/>
<line x1="59.69" y1="105.93" x2="55.51" y2="111.07" stroke="#808080" stroke-width="0.42"/>
<line x1="122.12" y1="204.31" x2="113.15" y2="201.91" stroke="#808080" stroke-width="0.42"/>
<line x1="176.67" y1="31.49" x2="167.70" y2="29.09" stroke="#808080" stroke-width="0.42"/>
<line x1="332.63" y1="178.93" x2="328.45" y2="184.07" stroke="#808080" stroke-width="0.42"/>
<line x1="249.40" y1="47.76" x2="240.43" y2="45.36" stroke="#808080" stroke-width="0.42"/>
<line x1="20.70" y1="95.50" x2="16.52" y2="100.64" stroke="#808080" stroke-width="0.42"/>
<line x1="103.94" y1="226.67" x2="94.97" y2="224.27" stroke="#808080" stroke-width="0.42"/>
<line x1="176.67" y1="-3.75" x2="167.70" y2="-6.15" stroke="#808080" stroke-width="0.42"/>
<line x1="371.63" y1="189.36" x2="365.81" y2="196.51" stroke="#808080" stroke-width="0.42"/>
<line x1="267.58" y1="25.39" x2="255.10" y2="22.05" stroke="#808080" stroke-width="0.42"/>
<line x1="-18.29" y1="85.07" x2="-24.11" y2="92.23" stroke="#808080" stroke-width="0.42"/>
<line x1="85.76" y1="249.04" x2="73.28" y2="245.70" stroke="#808080" stroke-width="0.42"/>
<line x1="176.67" y1="-38.99" x2="164.19" y2="-42.33" stroke="#808080" stroke-width="0.42"/>
<line x1="410.62" y1="199.79" x2="406.44" y2="204.93" stroke="#808080" stroke-width="0.42"/>
<line x1="285.76" y1="3.03" x2="276.79" y2="0.63" stroke="#808080" stroke-width="0.42"/>
<line x1="-57.28" y1="74.64" x2="-61.46" y2="79.79" stroke="#808080" stroke-width="0.42"/>
<line x1="67.58" y1="271.40" x2="58.61" y2="269.00" stroke="#808080" stroke-width="0.42"/>
<line x1="176.67" y1="-74.24" x2="167.70" y2="-76.64" stroke="#808080" stroke-width="0.42"/>
<line x1="449.61" y1="210.22" x2="445.43" y2="215.36" stroke="#808080" stroke-width="0.42"/>
<line x1="303.94" y1="-19.34" x2="294.97" y2="-21.74" stroke="#808080" stroke-width="0.42"/>
<line x1="-96.27" y1="64.21" x2="-100.45" y2="69.36" stroke="#808080" stroke-width="0.42"/>
<line x1="49.39" y1="293.77" x2="40.43" y2="291.37" stroke="#808080" stroke-width="0.42"/>
<line x1="176.67" y1="-109.48" x2="167.70" y2="-111.88" stroke="#808080" stroke-width="0.42"/>
<path d="M-75.06,64.98L-69.99,66.34M-64.93,63.61L-59.86,64.97M-67.65,66.97L-64.93,63.61M-67.65,66.97L-62.59,68.32M-70.38,70.32L-67.65,66.97M-70.38,70.32L-65.31,71.68M-62.59,68.32L-65.31,71.68M-57.52,65.59L-52.45,66.95M-52.45,66.95L-55.18,70.30M-55.18,70.30L-57.90,73.66M-62.97,72.30L-57.90,73.66M-62.97,72.30L-60.25,68.95M-60.25,68.95L-57.52,65.59" stroke="#808080" stroke-width="0.40" fill="none" stroke-linecap="round"/>
<path d="M75.01,273.93L72.65,276.84M77.41,279.75L75.04,282.66M71.56,278.18L77.41,279.75M71.56,278.18L69.19,281.09M65.71,276.62L71.56,278.18M65.71,276.62L63.34,279.53M69.19,281.09L63.34,279.53M73.95,284.00L71.59,286.90M71.59,286.90L65.74,285.34M65.74,285.34L59.89,283.78M62.25,280.87L59.89,283.78M62.25,280.87L68.10,282.43M68.10,282.43L73.95,284.00" stroke="#808080" stroke-width="0.40" fill="none" stroke-linecap="round"/>
<path d="M2.92,85.84L7.99,87.20M10.33,87.82L13.06,84.47M10.33,87.82L15.40,89.18M18.12,85.82L15.40,89.18M15.40,89.18L12.67,92.53M20.46,86.45L25.53,87.81M25.53,87.81L22.81,91.16M22.81,91.16L20.08,94.52M15.01,93.16L20.08,94.52M15.01,93.16L17.74,89.80M17.74,89.80L20.46,86.45" stroke="#808080" stroke-width="0.40" fill="none" stroke-linecap="round"/>
<path d="M111.38,229.21L109.01,232.11M107.92,233.45L113.77,235.02M107.92,233.45L105.56,236.36M111.41,237.93L105.56,236.36M105.56,236.36L99.71,234.80M110.31,239.27L107.95,242.18M107.95,242.18L102.10,240.61M102.10,240.61L96.25,239.05M98.62,236.14L96.25,239.05M98.62,236.14L104.47,237.70M104.47,237.70L110.31,239.27" stroke="#808080" stroke-width="0.40" fill="none" stroke-linecap="round"/>
<path d="M337.08,175.22L339.80,171.86M337.08,175.22L342.15,176.57M344.87,173.22L342.15,176.57M342.15,176.57L339.42,179.93M347.21,173.84L352.28,175.20M352.28,175.20L349.55,178.55M349.55,178.55L346.83,181.91M341.76,180.55L346.83,181.91M341.76,180.55L344.48,177.20M344.48,177.20L347.21,173.84" stroke="#808080" stroke-width="0.40" fill="none" stroke-linecap="round"/>
<path d="M264.47,40.90L270.32,42.46M264.47,40.90L262.10,43.80M267.95,45.37L262.10,43.80M262.10,43.80L256.26,42.24M266.86,46.71L264.50,49.62M264.50,49.62L258.65,48.05M258.65,48.05L252.80,46.49M255.16,43.58L252.80,46.49M255.16,43.58L261.01,45.15M261.01,45.15L266.86,46.71" stroke="#808080" stroke-width="0.40" fill="none" stroke-linecap="round"/>
<path d="M417.79,192.72L422.86,194.07M415.06,196.07L417.79,192.72M415.06,196.07L420.13,197.43M412.33,199.43L415.06,196.07M412.33,199.43L417.40,200.78M420.13,197.43L417.40,200.78M425.20,194.70L430.26,196.06M430.26,196.06L427.54,199.41M427.54,199.41L424.81,202.77M419.74,201.41L424.81,202.77M419.74,201.41L422.47,198.06M422.47,198.06L425.20,194.70" stroke="#808080" stroke-width="0.40" fill="none" stroke-linecap="round"/>
<path d="M306.68,-2.27L304.32,0.64M300.83,-3.83L306.68,-2.27M300.83,-3.83L298.47,-0.93M294.98,-5.40L300.83,-3.83M294.98,-5.40L292.62,-2.49M298.47,-0.93L292.62,-2.49M303.23,1.98L300.86,4.89M300.86,4.89L295.01,3.32M295.01,3.32L289.16,1.76M291.53,-1.15L289.16,1.76M291.53,-1.15L297.38,0.42M297.38,0.42L303.23,1.98" stroke="#808080" stroke-width="0.40" fill="none" stroke-linecap="round"/>
<polygon points="308.96,136.95 308.37,130.05 308.37,90.58 308.96,97.48" fill="#abbfaa"/>
<polygon points="308.67,132.19 307.33,125.32 307.33,85.85 308.67,92.71" fill="#adc0ac"/>
<polygon points="307.86,127.44 305.77,120.64 305.77,81.16 307.86,87.97" fill="#aec1ad"/>
<polygon points="306.53,122.74 303.70,116.02 303.70,76.55 306.53,83.26" fill="#aec2ad"/>
<polygon points="304.69,118.09 301.13,111.49 301.13,72.01 304.69,78.62" fill="#aec2ad"/>
<polygon points="302.34,113.51 298.06,107.05 298.06,67.58 302.34,74.04" fill="#adc1ac"/>
<polygon points="299.50,109.03 294.52,102.74 294.52,63.27 299.50,69.56" fill="#acc0ab"/>
<polygon points="296.17,104.67 290.52,98.56 290.52,59.09 296.17,65.20" fill="#aabeaa"/>
<polygon points="292.37,100.43 286.06,94.54 286.06,55.07 292.37,60.96" fill="#a8bca8"/>
<polygon points="288.12,96.33 281.17,90.69 281.17,51.21 288.12,56.86" fill="#a6b9a5"/>
<polygon points="283.42,92.40 275.87,87.01 275.87,47.54 283.42,52.93" fill="#a3b5a2"/>
<polygon points="278.31,88.64 270.18,83.54 270.18,44.07 278.31,49.17" fill="#9fb19e"/>
<polygon points="272.79,85.08 264.12,80.28 264.12,40.81 272.79,45.61" fill="#9bad9a"/>
<polygon points="266.89,81.72 257.72,77.24 257.72,37.77 266.89,42.25" fill="#96a896"/>
<polygon points="260.64,78.58 250.99,74.44 250.99,34.97 260.64,39.11" fill="#92a291"/>
<polygon points="254.05,75.67 243.97,71.89 243.97,32.42 254.05,36.20" fill="#8c9c8c"/>
<polygon points="247.16,73.00 236.69,69.59 236.69,30.12 247.16,33.53" fill="#879686"/>
<polygon points="240.00,70.59 229.17,67.56 229.17,28.09 240.00,31.12" fill="#818f80"/>
<polygon points="232.58,68.44 221.44,65.81 221.44,26.34 232.58,28.97" fill="#7a887a"/>
<polygon points="224.94,66.57 213.53,64.34 213.53,24.87 224.94,27.09" fill="#738173"/>
<polygon points="217.11,64.97 205.48,63.16 205.48,23.68 217.11,25.50" fill="#6c796c"/>
<polygon points="209.12,63.65 197.32,62.26 197.32,22.79 209.12,24.18" fill="#657165"/>
<polygon points="201.00,62.63 189.07,61.67 189.07,22.20 201.00,23.16" fill="#5e695d"/>
<polygon points="192.79,61.90 180.78,61.37 180.78,21.90 192.79,22.43" fill="#566056"/>
<polygon points="184.51,61.47 172.47,61.37 172.47,21.90 184.51,22.00" fill="#4e574e"/>
<polygon points="176.21,61.33 164.17,61.67 164.17,22.20 176.21,21.86" fill="#464e46"/>
<polygon points="167.90,61.50 155.93,62.27 155.93,22.80 167.90,22.03" fill="#3e453e"/>
<polygon points="159.63,61.97 147.76,63.17 147.76,23.70 159.63,22.49" fill="#363c36"/>
<polygon points="151.43,62.73 139.72,64.35 139.72,24.88 151.43,23.26" fill="#2e332e"/>
<polygon points="143.32,63.78 131.81,65.83 131.81,26.36 143.32,24.31" fill="#323731"/>
<polygon points="135.35,65.13 124.09,67.58 124.09,28.11 135.35,25.66" fill="#3a403a"/>
<polygon points="127.54,66.76 116.57,69.62 116.57,30.15 127.54,27.29" fill="#424942"/>
<polygon points="119.92,68.67 109.29,71.91 109.29,32.44 119.92,29.20" fill="#4a524a"/>
<polygon points="112.53,70.85 102.27,74.47 102.27,35.00 112.53,31.38" fill="#525b51"/>
<polygon points="105.39,73.29 95.55,77.27 95.55,37.80 105.39,33.82" fill="#5a6459"/>
<polygon points="98.54,75.98 89.15,80.31 89.15,40.84 98.54,36.51" fill="#616c61"/>
<polygon points="91.99,78.92 83.09,83.58 83.09,44.11 91.99,39.45" fill="#697468"/>
<polygon points="85.77,82.08 77.40,87.05 77.40,47.58 85.77,42.61" fill="#707c6f"/>
<polygon points="79.92,85.46 72.11,90.73 72.11,51.26 79.92,45.99" fill="#768476"/>
<polygon points="74.44,89.05 67.23,94.58 67.23,55.11 74.44,49.58" fill="#7d8b7c"/>
<polygon points="69.37,92.83 62.77,98.61 62.77,59.14 69.37,53.36" fill="#839283"/>
<polygon points="64.72,96.78 58.77,102.79 58.77,63.32 64.72,57.31" fill="#899989"/>
<polygon points="60.52,100.89 55.24,107.10 55.24,67.63 60.52,61.42" fill="#8f9f8e"/>
<polygon points="56.77,105.15 52.18,111.54 52.18,72.06 56.77,65.67" fill="#94a593"/>
<polygon points="53.50,109.53 49.62,116.07 49.62,76.60 53.50,70.06" fill="#98aa98"/>
<polygon points="50.71,114.02 47.55,120.69 47.55,81.22 50.71,74.55" fill="#9daf9c"/>
<polygon points="48.42,118.60 46.00,125.37 46.00,85.90 48.42,79.13" fill="#a1b3a0"/>
<polygon points="46.63,123.26 44.96,130.10 44.96,90.63 46.63,83.78" fill="#a4b7a3"/>
<polygon points="45.36,127.97 44.44,134.86 44.44,95.39 45.36,88.50" fill="#a7baa6"/>
<polygon points="44.61,132.71 44.44,139.62 44.44,100.15 44.61,93.24" fill="#a9bda9"/>
<g clip-path="url(#c1)">
<polygon points="155.44,39.06 155.32,37.87 154.98,36.73 154.42,35.65 153.64,34.65 152.66,33.76 151.49,32.98 150.15,32.34 148.67,31.86 147.05,31.53 145.33,31.38 143.54,31.41 141.70,31.61 139.84,31.99 138.01,32.54 136.21,33.24 134.50,34.10 132.91,35.08 131.45,36.17 130.16,37.34 129.07,38.57 128.20,39.84 127.56,41.12 127.18,42.39 127.05,43.61 127.18,44.78 127.56,45.87 128.20,46.86 129.07,47.74 130.16,48.49 131.45,49.12 132.91,49.62 134.50,49.97 136.21,50.17 138.01,50.24 139.84,50.16 141.70,49.94 143.54,49.58 145.33,49.08 147.05,48.47 148.67,47.73 150.15,46.88 151.49,45.94 152.66,44.91 153.64,43.81 154.42,42.66 154.98,41.47 155.32,40.26" fill="#869585"/>
<polygon points="145.33,49.08 147.05,48.47 151.58,42.90 149.90,43.46" fill="#dbf4da" stroke="#dbf4da" stroke-width="0.3"/>
<polygon points="147.05,48.47 148.67,47.73 153.16,42.21 151.58,42.90" fill="#dbf4da" stroke="#dbf4da" stroke-width="0.3"/>
<polygon points="143.54,49.58 145.33,49.08 149.90,43.46 148.16,43.90" fill="#dbf4da" stroke="#dbf4da" stroke-width="0.3"/>
<polygon points="148.67,47.73 150.15,46.88 154.61,41.40 153.16,42.21" fill="#dbf4da" stroke="#dbf4da" stroke-width="0.3"/>
<polygon points="141.70,49.94 143.54,49.58 148.16,43.90 146.37,44.19" fill="#dbf4da" stroke="#dbf4da" stroke-width="0.3"/>
<polygon points="150.15,46.88 151.49,45.94 155.92,40.50 154.61,41.40" fill="#dbf4da" stroke="#dbf4da" stroke-width="0.3"/>
<polygon points="139.84,50.16 141.70,49.94 146.37,44.19 144.57,44.35" fill="#d5edd4" stroke="#d5edd4" stroke-width="0.3"/>
<polygon points="151.49,45.94 152.66,44.91 157.06,39.50 155.92,40.50" fill="#dbf4da" stroke="#dbf4da" stroke-width="0.3"/>
<polygon points="138.01,50.24 139.84,50.16 144.57,44.35 142.78,44.36" fill="#c5dbc4" stroke="#c5dbc4" stroke-width="0.3"/>
<polygon points="152.66,44.91 153.64,43.81 158.02,38.43 157.06,39.50" fill="#dbf4da" stroke="#dbf4da" stroke-width="0.3"/>
<polygon points="136.21,50.17 138.01,50.24 142.78,44.36 141.05,44.23" fill="#b2c6b1" stroke="#b2c6b1" stroke-width="0.3"/>
<polygon points="134.50,49.97 136.21,50.17 141.05,44.23 139.39,43.95" fill="#9daf9c" stroke="#9daf9c" stroke-width="0.3"/>
<polygon points="132.91,49.62 134.50,49.97 139.39,43.95 137.85,43.54" fill="#869585" stroke="#869585" stroke-width="0.3"/>
<polygon points="131.45,49.12 132.91,49.62 137.85,43.54 136.44,42.98" fill="#6d7a6d" stroke="#6d7a6d" stroke-width="0.3"/>
<polygon points="130.16,48.49 131.45,49.12 136.44,42.98 135.20,42.30" fill="#545d53" stroke="#545d53" stroke-width="0.3"/>
<polygon points="129.07,47.74 130.16,48.49 135.20,42.30 134.15,41.49" fill="#394039" stroke="#394039" stroke-width="0.3"/>
<polygon points="128.20,46.86 129.07,47.74 134.15,41.49 133.32,40.57" fill="#393f39" stroke="#393f39" stroke-width="0.3"/>
<polygon points="127.56,45.87 128.20,46.86 133.32,40.57 132.70,39.55" fill="#535d53" stroke="#535d53" stroke-width="0.3"/>
<polygon points="127.18,44.78 127.56,45.87 132.70,39.55 132.33,38.44" fill="#6d796c" stroke="#6d796c" stroke-width="0.3"/>
<polygon points="127.05,43.61 127.18,44.78 132.33,38.44 132.21,37.27" fill="#869585" stroke="#869585" stroke-width="0.3"/>
<polygon points="127.18,42.39 127.05,43.61 132.21,37.27 132.33,36.05" fill="#9dae9c" stroke="#9dae9c" stroke-width="0.3"/>
<polygon points="127.56,41.12 127.18,42.39 132.33,36.05 132.70,34.80" fill="#b2c6b1" stroke="#b2c6b1" stroke-width="0.3"/>
<polygon points="128.20,39.84 127.56,41.12 132.70,34.80 133.32,33.55" fill="#c4dbc4" stroke="#c4dbc4" stroke-width="0.3"/>
<polygon points="129.07,38.57 128.20,39.84 133.32,33.55 134.15,32.32" fill="#d5edd4" stroke="#d5edd4" stroke-width="0.3"/>
<polygon points="159.77,33.72 159.66,32.53 159.33,31.38 158.78,30.29 158.02,29.27 157.06,28.35 155.92,27.54 154.61,26.87 153.16,26.34 151.58,25.97 149.90,25.76 148.16,25.73 146.37,25.87 144.57,26.18 142.78,26.66 141.05,27.30 139.39,28.08 137.85,29.00 136.44,30.02 135.20,31.14 134.15,32.32 133.32,33.55 132.70,34.80 132.33,36.05 132.21,37.27 132.33,38.44 132.70,39.55 133.32,40.57 134.15,41.49 135.20,42.30 136.44,42.98 137.85,43.54 139.39,43.95 141.05,44.23 142.78,44.36 144.57,44.35 146.37,44.19 148.16,43.90 149.90,43.46 151.58,42.90 153.16,42.21 154.61,41.40 155.92,40.50 157.06,39.50 158.02,38.43 158.78,37.30 159.33,36.12 159.66,34.93" fill="#fafafa"/>
</g>
<g clip-path="url(#c2)">
<polygon points="82.34,64.28 82.38,63.52 82.50,62.72 82.71,61.90 82.99,61.08 83.34,60.26 83.76,59.47 84.25,58.71 84.79,58.00 85.37,57.36 85.99,56.78 86.63,56.29 87.29,55.90 87.96,55.60 88.61,55.40 89.25,55.31 89.86,55.34 90.43,55.46 90.94,55.70 91.39,56.03 91.78,56.46 92.08,56.98 92.31,57.57 92.44,58.23 92.49,58.94 92.44,59.70 92.31,60.49 92.08,61.29 91.78,62.10 91.39,62.90 90.94,63.67 90.43,64.41 89.86,65.10 89.25,65.73 88.61,66.29 87.96,66.78 87.29,67.17 86.63,67.47 85.99,67.68 85.37,67.78 84.79,67.77 84.25,67.66 83.76,67.44 83.34,67.13 82.99,66.72 82.71,66.22 82.50,65.64 82.38,64.99" fill="#d4ecd3"/>
<polygon points="90.94,63.67 90.43,64.41 84.61,60.77 85.12,60.03" fill="#dbf4da" stroke="#dbf4da" stroke-width="0.3"/>
<polygon points="91.39,62.90 90.94,63.67 85.12,60.03 85.58,59.26" fill="#dbf4da" stroke="#dbf4da" stroke-width="0.3"/>
<polygon points="90.43,64.41 89.86,65.10 84.05,61.46 84.61,60.77" fill="#dbf4da" stroke="#dbf4da" stroke-width="0.3"/>
<polygon points="91.78,62.10 91.39,62.90 85.58,59.26 85.96,58.46" fill="#dbf4da" stroke="#dbf4da" stroke-width="0.3"/>
<polygon points="89.86,65.10 89.25,65.73 83.44,62.09 84.05,61.46" fill="#dbf4da" stroke="#dbf4da" stroke-width="0.3"/>
<polygon points="92.08,61.29 91.78,62.10 85.96,58.46 86.27,57.65" fill="#dbf4da" stroke="#dbf4da" stroke-width="0.3"/>
<polygon points="89.25,65.73 88.61,66.29 82.80,62.66 83.44,62.09" fill="#dbf4da" stroke="#dbf4da" stroke-width="0.3"/>
<polygon points="92.31,60.49 92.08,61.29 86.27,57.65 86.49,56.84" fill="#d1e8d0" stroke="#d1e8d0" stroke-width="0.3"/>
<polygon points="88.61,66.29 87.96,66.78 82.14,63.14 82.80,62.66" fill="#dbf4da" stroke="#dbf4da" stroke-width="0.3"/>
<polygon points="92.44,59.70 92.31,60.49 86.49,56.84 86.62,56.06" fill="#bed4bd" stroke="#bed4bd" stroke-width="0.3"/>
<polygon points="87.96,66.78 87.29,67.17 81.48,63.53 82.14,63.14" fill="#dbf4da" stroke="#dbf4da" stroke-width="0.3"/>
<polygon points="92.49,58.94 92.44,59.70 86.62,56.06 86.67,55.30" fill="#a9bda8" stroke="#a9bda8" stroke-width="0.3"/>
<polygon points="87.29,67.17 86.63,67.47 80.82,63.83 81.48,63.53" fill="#d4ecd3" stroke="#d4ecd3" stroke-width="0.3"/>
<polygon points="92.44,58.23 92.49,58.94 86.67,55.30 86.62,54.58" fill="#92a392" stroke="#92a392" stroke-width="0.3"/>
<polygon points="86.63,67.47 85.99,67.68 80.17,64.04 80.82,63.83" fill="#c2d8c1" stroke="#c2d8c1" stroke-width="0.3"/>
<polygon points="92.31,57.57 92.44,58.23 86.62,54.58 86.49,53.93" fill="#798779" stroke="#798779" stroke-width="0.3"/>
<polygon points="85.99,67.68 85.37,67.78 79.55,64.14 80.17,64.04" fill="#aec2ad" stroke="#aec2ad" stroke-width="0.3"/>
<polygon points="92.08,56.98 92.31,57.57 86.49,53.93 86.27,53.33" fill="#5f6a5f" stroke="#5f6a5f" stroke-width="0.3"/>
<polygon points="85.37,67.78 84.79,67.77 78.97,64.13 79.55,64.14" fill="#97a897" stroke="#97a897" stroke-width="0.3"/>
<polygon points="91.78,56.46 92.08,56.98 86.27,53.33 85.96,52.82" fill="#444c44" stroke="#444c44" stroke-width="0.3"/>
<polygon points="84.79,67.77 84.25,67.66 78.43,64.02 78.97,64.13" fill="#7f8d7e" stroke="#7f8d7e" stroke-width="0.3"/>
<polygon points="91.39,56.03 91.78,56.46 85.96,52.82 85.58,52.39" fill="#2f342e" stroke="#2f342e" stroke-width="0.3"/>
<polygon points="84.25,67.66 83.76,67.44 77.95,63.80 78.43,64.02" fill="#657064" stroke="#657064" stroke-width="0.3"/>
<polygon points="90.94,55.70 91.39,56.03 85.58,52.39 85.12,52.06" fill="#4a534a" stroke="#4a534a" stroke-width="0.3"/>
<polygon points="76.52,60.63 76.56,59.87 76.68,59.08 76.89,58.26 77.17,57.44 77.52,56.62 77.95,55.83 78.43,55.07 78.97,54.36 79.55,53.72 80.17,53.14 80.82,52.65 81.48,52.26 82.14,51.96 82.80,51.76 83.44,51.68 84.05,51.70 84.61,51.82 85.12,52.06 85.58,52.39 85.96,52.82 86.27,53.33 86.49,53.93 86.62,54.58 86.67,55.30 86.62,56.06 86.49,56.84 86.27,57.65 85.96,58.46 85.58,59.26 85.12,60.03 84.61,60.77 84.05,61.46 83.44,62.09 82.80,62.66 82.14,63.14 81.48,63.53 80.82,63.83 80.17,64.04 79.55,64.14 78.97,64.13 78.43,64.02 77.95,63.80 77.52,63.49 77.17,63.08 76.89,62.58 76.68,62.00 76.56,61.35" fill="#fafafa"/>
</g>
<g clip-path="url(#c3)">
<polygon points="269.42,63.37 269.46,62.66 269.59,62.01 269.80,61.43 270.08,60.93 270.43,60.52 270.85,60.20 271.33,59.99 271.85,59.89 272.41,59.90 272.99,60.02 273.60,60.25 274.21,60.58 274.81,61.01 275.40,61.53 275.97,62.13 276.50,62.80 276.99,63.54 277.43,64.32 277.81,65.14 278.13,65.97 278.39,66.81 278.57,67.63 278.69,68.43 278.72,69.19 278.69,69.90 278.57,70.55 278.39,71.12 278.13,71.61 277.81,72.00 277.43,72.29 276.99,72.49 276.50,72.57 275.97,72.55 275.40,72.42 274.81,72.19 274.21,71.85 273.60,71.43 272.99,70.91 272.41,70.32 271.85,69.66 271.33,68.94 270.85,68.18 270.43,67.38 270.08,66.57 269.80,65.74 269.59,64.93 269.46,64.13" fill="#768375"/>
<polygon points="270.85,68.18 270.43,67.38 276.78,64.04 277.20,64.84" fill="#717e70" stroke="#717e70" stroke-width="0.3"/>
<polygon points="271.33,68.94 270.85,68.18 277.20,64.84 277.67,65.61" fill="#879686" stroke="#879686" stroke-width="0.3"/>
<polygon points="270.43,67.38 270.08,66.57 276.43,63.23 276.78,64.04" fill="#5a6459" stroke="#5a6459" stroke-width="0.3"/>
<polygon points="271.85,69.66 271.33,68.94 277.67,65.61 278.19,66.32" fill="#9bad9b" stroke="#9bad9b" stroke-width="0.3"/>
<polygon points="270.08,66.57 269.80,65.74 276.15,62.40 276.43,63.23" fill="#424941" stroke="#424941" stroke-width="0.3"/>
<polygon points="272.41,70.32 271.85,69.66 278.19,66.32 278.75,66.99" fill="#aec2ad" stroke="#aec2ad" stroke-width="0.3"/>
<polygon points="269.80,65.74 269.59,64.93 275.94,61.59 276.15,62.40" fill="#2e342e" stroke="#2e342e" stroke-width="0.3"/>
<polygon points="272.99,70.91 272.41,70.32 278.75,66.99 279.34,67.58" fill="#bed4be" stroke="#bed4be" stroke-width="0.3"/>
<polygon points="269.59,64.93 269.46,64.13 275.82,60.79 275.94,61.59" fill="#474f46" stroke="#474f46" stroke-width="0.3"/>
<polygon points="273.60,71.43 272.99,70.91 279.34,67.58 279.94,68.09" fill="#cce4cb" stroke="#cce4cb" stroke-width="0.3"/>
<polygon points="269.46,64.13 269.42,63.37 275.77,60.03 275.82,60.79" fill="#5f695e" stroke="#5f695e" stroke-width="0.3"/>
<polygon points="274.21,71.85 273.60,71.43 279.94,68.09 280.55,68.52" fill="#d7f0d6" stroke="#d7f0d6" stroke-width="0.3"/>
<polygon points="269.42,63.37 269.46,62.66 275.82,59.32 275.77,60.03" fill="#768375" stroke="#768375" stroke-width="0.3"/>
<polygon points="274.81,72.19 274.21,71.85 280.55,68.52 281.15,68.85" fill="#dbf4da" stroke="#dbf4da" stroke-width="0.3"/>
<polygon points="269.46,62.66 269.59,62.01 275.94,58.67 275.82,59.32" fill="#8b9b8b" stroke="#8b9b8b" stroke-width="0.3"/>
<polygon points="275.40,72.42 274.81,72.19 281.15,68.85 281.74,69.08" fill="#dbf4da" stroke="#dbf4da" stroke-width="0.3"/>
<polygon points="269.59,62.01 269.80,61.43 276.15,58.09 275.94,58.67" fill="#a0b29f" stroke="#a0b29f" stroke-width="0.3"/>
<polygon points="275.97,72.55 275.40,72.42 281.74,69.08 282.31,69.21" fill="#dbf4da" stroke="#dbf4da" stroke-width="0.3"/>
<polygon points="269.80,61.43 270.08,60.93 276.43,57.59 276.15,58.09" fill="#b2c6b1" stroke="#b2c6b1" stroke-width="0.3"/>
<polygon points="276.50,72.57 275.97,72.55 282.31,69.21 282.84,69.24" fill="#dbf4da" stroke="#dbf4da" stroke-width="0.3"/>
<polygon points="270.08,60.93 270.43,60.52 276.78,57.18 276.43,57.59" fill="#c2d8c1" stroke="#c2d8c1" stroke-width="0.3"/>
<polygon points="276.99,72.49 276.50,72.57 282.84,69.24 283.33,69.15" fill="#dbf4da" stroke="#dbf4da" stroke-width="0.3"/>
<polygon points="270.43,60.52 270.85,60.20 277.20,56.87 276.78,57.18" fill="#cfe7ce" stroke="#cfe7ce" stroke-width="0.3"/>
<polygon points="277.43,72.29 276.99,72.49 283.33,69.15 283.78,68.96" fill="#d9f2d8" stroke="#d9f2d8" stroke-width="0.3"/>
<polygon points="275.77,60.03 275.82,59.32 275.94,58.67 276.15,58.09 276.43,57.59 276.78,57.18 277.20,56.87 277.67,56.66 278.19,56.56 278.75,56.57 279.34,56.68 279.94,56.91 280.55,57.24 281.15,57.67 281.74,58.19 282.31,58.79 282.84,59.47 283.33,60.20 283.78,60.98 284.16,61.80 284.48,62.63 284.74,63.47 284.93,64.29 285.04,65.09 285.08,65.86 285.04,66.57 284.93,67.21 284.74,67.78 284.48,68.27 284.16,68.66 283.78,68.96 283.33,69.15 282.84,69.24 282.31,69.21 281.74,69.08 281.15,68.85 280.55,68.52 279.94,68.09 279.34,67.58 278.75,66.99 278.19,66.32 277.67,65.61 277.20,64.84 276.78,64.04 276.43,63.23 276.15,62.40 275.94,61.59 275.82,60.79" fill="#fafafa"/>
</g>
<path d="M304.37,131.90 L305.39,130.61 L306.37,129.32 L307.31,128.02 L308.21,126.70 L309.07,125.38 L309.89,124.05 L310.67,122.72 L311.41,121.37 L312.11,120.02 L312.77,118.66 L313.38,117.29 L313.96,115.92 L314.49,114.55 L314.98,113.16 L315.43,111.78 L315.83,110.39 L316.20,108.99 L316.52,107.59 L316.79,106.19 L317.03,104.79 L317.22,103.38 L317.37,101.97 L317.48,100.56 L317.54,99.15 L317.57,97.74 L317.54,96.33 L317.48,94.92 L317.37,93.51 L317.22,92.11 L317.03,90.70 L316.79,89.30 L316.52,87.89 L316.20,86.50 L315.83,85.10 L315.43,83.71 L314.98,82.32 L314.49,80.94 L313.96,79.56 L313.38,78.19 L312.77,76.83 L312.11,75.47 L311.41,74.12 L310.67,72.77 L309.89,71.43 L309.07,70.10 L308.21,68.78 L307.31,67.47 L306.37,66.17 L305.39,64.87 L304.37,63.59 L303.31,62.32 L302.21,61.05 L301.07,59.80 L299.90,58.56 L298.69,57.34 L297.44,56.12 L296.16,54.92 L294.84,53.73 L293.48,52.55 L292.09,51.39 L290.66,50.24 L289.19,49.11 L287.70,47.99 L286.17,46.88 L284.60,45.80 L283.01,44.72 L281.38,43.67 L279.71,42.63 L278.02,41.60 L276.30,40.60 L274.54,39.61 L272.76,38.64 L270.95,37.69 L269.11,36.75 L267.24,35.83 L265.34,34.94 L263.41,34.06 L261.46,33.20 L259.49,32.36 L257.48,31.54 L255.46,30.74 L253.41,29.97 L251.33,29.21 L249.24,28.47 L247.12,27.75 L244.98,27.06 L242.82,26.39 L240.63,25.74 L238.43,25.11 L236.21,24.50 L233.98,23.91 L231.72,23.35 L229.45,22.81 L227.16,22.30 L224.86,21.80 L222.54,21.33 L220.21,20.88 L217.86,20.46 L215.51,20.06 L213.14,19.68 L210.75,19.33 L208.36,19.00 L205.96,18.69 L203.55,18.41 L201.14,18.16 L198.71,17.92 L196.28,17.71 L193.84,17.53 L191.40,17.37 L188.95,17.24 L186.50,17.12 L184.04,17.04 L181.59,16.98 L179.13,16.94 L176.67,16.93 L174.21,16.94 L171.75,16.98 L169.29,17.04 L166.84,17.12 L164.39,17.24 L161.94,17.37 L159.50,17.53 L157.06,17.71 L154.63,17.92 L152.20,18.16 L149.78,18.41 L147.37,18.69 L144.97,19.00 L142.58,19.33 L140.20,19.68 L137.83,20.06 L135.47,20.46 L133.13,20.88 L130.80,21.33 L128.48,21.80 L126.18,22.30 L123.89,22.81 L121.62,23.35 L119.36,23.91 L117.12,24.50 L114.90,25.11 L112.70,25.74 L110.52,26.39 L108.36,27.06 L106.22,27.75 L104.10,28.47 L102.00,29.21 L99.93,29.97 L97.88,30.74 L95.85,31.54 L93.85,32.36 L91.87,33.20 L89.92,34.06 L88.00,34.94 L86.10,35.83 L84.23,36.75 L82.39,37.69 L80.58,38.64 L78.79,39.61 L77.04,40.60 L75.32,41.60 L73.62,42.63 L71.96,43.67 L70.33,44.72 L68.73,45.80 L67.17,46.88 L65.64,47.99 L64.14,49.11 L62.68,50.24 L61.25,51.39 L59.86,52.55 L58.50,53.73 L57.18,54.92 L55.90,56.12 L54.65,57.34 L53.44,58.56 L52.26,59.80 L51.13,61.05 L50.03,62.32 L48.97,63.59 L47.95,64.87 L46.97,66.17 L46.03,67.47 L45.13,68.78 L44.27,70.10 L43.45,71.43 L42.67,72.77 L41.93,74.12 L41.23,75.47 L40.57,76.83 L39.96,78.19 L39.38,79.56 L38.85,80.94 L38.36,82.32 L37.91,83.71 L37.51,85.10 L37.14,86.50 L36.82,87.89 L36.54,89.30 L36.31,90.70 L36.11,92.11 L35.96,93.51 L35.86,94.92 L35.79,96.33 L35.77,97.74 L35.79,99.15 L35.86,100.56 L35.96,101.97 L36.11,103.38 L36.31,104.79 L36.54,106.19 L36.82,107.59 L37.14,108.99 L37.51,110.39 L37.91,111.78 L38.36,113.16 L38.85,114.55 L39.38,115.92 L39.96,117.29 L40.57,118.66 L41.23,120.02 L41.93,121.37 L42.67,122.72 L43.45,124.05 L44.27,125.38 L45.13,126.70 L46.03,128.02 L46.97,129.32 L47.95,130.61 L48.97,131.90 L50.03,133.17 L51.13,134.43 L52.26,135.68 L53.44,136.92 L54.65,138.15 L55.90,139.37 L57.18,140.57 L58.50,141.76 L59.86,142.93 L61.25,144.10 L62.68,145.25 L64.14,146.38 L65.64,147.50 L67.17,148.60 L68.73,149.69 L70.33,150.76 L71.96,151.82 L73.62,152.86 L75.32,153.88 L77.04,154.89 L78.79,155.88 L80.58,156.85 L82.39,157.80 L84.23,158.74 L86.10,159.65 L88.00,160.55 L89.92,161.43 L91.87,162.29 L93.85,163.12 L95.85,163.94 L97.88,164.74 L99.93,165.52 L102.00,166.28 L104.10,167.02 L106.22,167.73 L108.36,168.43 L110.52,169.10 L112.70,169.75 L114.90,170.38 L117.12,170.99 L119.36,171.57 L121.62,172.13 L123.89,172.67 L126.18,173.19 L128.48,173.69 L130.80,174.16 L133.13,174.60 L135.47,175.03 L137.83,175.43 L140.20,175.81 L142.58,176.16 L144.97,176.49 L147.37,176.79 L149.78,177.07 L152.20,177.33 L154.63,177.56 L157.06,177.77 L159.50,177.96 L161.94,178.12 L164.39,178.25 L166.84,178.36 L169.29,178.45 L171.75,178.51 L174.21,178.55 L176.67,178.56 L179.13,178.55 L181.59,178.51 L184.04,178.45 L186.50,178.36 L188.95,178.25 L191.40,178.12 L193.84,177.96 L196.28,177.77 L198.71,177.56 L201.14,177.33 L203.55,177.07 L205.96,176.79 L208.36,176.49 L210.75,176.16 L213.14,175.81 L215.51,175.43 L217.86,175.03 L220.21,174.60 L222.54,174.16 L224.86,173.69 L227.16,173.19 L229.45,172.67 L231.72,172.13 L233.98,171.57 L236.21,170.99 L238.43,170.38 L240.63,169.75 L242.82,169.10 L244.98,168.43 L247.12,167.73 L249.24,167.02 L251.33,166.28 L253.41,165.52 L255.46,164.74 L257.48,163.94 L259.49,163.12 L261.46,162.29 L263.41,161.43 L265.34,160.55 L267.24,159.65 L269.11,158.74 L270.95,157.80 L272.76,156.85 L274.54,155.88 L276.30,154.89 L278.02,153.88 L279.71,152.86 L281.38,151.82 L283.01,150.76 L284.60,149.69 L286.17,148.60 L287.70,147.50 L289.19,146.38 L290.66,145.25 L292.09,144.10 L293.48,142.93 L294.84,141.76 L296.16,140.57 L297.44,139.37 L298.69,138.15 L299.90,136.92 L301.07,135.68 L302.21,134.43 L303.31,133.17 L304.37,131.90 Z M296.57,129.81 L295.57,131.01 L294.54,132.19 L293.48,133.37 L292.37,134.53 L291.24,135.68 L290.07,136.82 L288.86,137.95 L287.62,139.07 L286.34,140.18 L285.04,141.27 L283.70,142.34 L282.32,143.41 L280.92,144.46 L279.48,145.50 L278.01,146.52 L276.51,147.53 L274.98,148.52 L273.42,149.49 L271.83,150.45 L270.21,151.40 L268.57,152.33 L266.89,153.24 L265.19,154.13 L263.46,155.01 L261.71,155.87 L259.92,156.71 L258.12,157.54 L256.28,158.34 L254.43,159.13 L252.55,159.90 L250.65,160.65 L248.72,161.38 L246.77,162.09 L244.80,162.79 L242.82,163.46 L240.81,164.11 L238.78,164.74 L236.73,165.35 L234.66,165.94 L232.58,166.51 L230.48,167.06 L228.36,167.59 L226.23,168.10 L224.08,168.58 L221.92,169.05 L219.74,169.49 L217.55,169.91 L215.35,170.31 L213.13,170.68 L210.91,171.04 L208.67,171.37 L206.43,171.68 L204.17,171.97 L201.91,172.23 L199.64,172.47 L197.36,172.69 L195.08,172.89 L192.79,173.06 L190.50,173.21 L188.20,173.33 L185.90,173.44 L183.59,173.52 L181.29,173.58 L178.98,173.61 L176.67,173.62 L174.36,173.61 L172.05,173.58 L169.74,173.52 L167.44,173.44 L165.14,173.33 L162.84,173.21 L160.55,173.06 L158.26,172.89 L155.97,172.69 L153.70,172.47 L151.43,172.23 L149.16,171.97 L146.91,171.68 L144.66,171.37 L142.43,171.04 L140.20,170.68 L137.99,170.31 L135.79,169.91 L133.60,169.49 L131.42,169.05 L129.26,168.58 L127.11,168.10 L124.98,167.59 L122.86,167.06 L120.76,166.51 L118.67,165.94 L116.61,165.35 L114.56,164.74 L112.53,164.11 L110.52,163.46 L108.53,162.79 L106.56,162.09 L104.62,161.38 L102.69,160.65 L100.79,159.90 L98.91,159.13 L97.05,158.34 L95.22,157.54 L93.41,156.71 L91.63,155.87 L89.88,155.01 L88.15,154.13 L86.44,153.24 L84.77,152.33 L83.12,151.40 L81.50,150.45 L79.92,149.49 L78.36,148.52 L76.83,147.53 L75.33,146.52 L73.86,145.50 L72.42,144.46 L71.01,143.41 L69.64,142.34 L68.30,141.27 L66.99,140.18 L65.72,139.07 L64.48,137.95 L63.27,136.82 L62.10,135.68 L60.96,134.53 L59.86,133.37 L58.79,132.19 L57.76,131.01 L56.77,129.81 L55.81,128.61 L54.89,127.39 L54.01,126.17 L53.16,124.94 L52.35,123.70 L51.58,122.45 L50.85,121.19 L50.16,119.93 L49.50,118.66 L48.88,117.38 L48.30,116.10 L47.77,114.81 L47.27,113.52 L46.81,112.22 L46.38,110.92 L46.00,109.61 L45.66,108.30 L45.36,106.99 L45.10,105.67 L44.88,104.36 L44.70,103.04 L44.56,101.71 L44.46,100.39 L44.40,99.07 L44.38,97.74 L44.40,96.42 L44.46,95.10 L44.56,93.77 L44.70,92.45 L44.88,91.13 L45.10,89.81 L45.36,88.50 L45.66,87.18 L46.00,85.87 L46.38,84.57 L46.81,83.26 L47.27,81.97 L47.77,80.67 L48.30,79.39 L48.88,78.10 L49.50,76.83 L50.16,75.56 L50.85,74.29 L51.58,73.04 L52.35,71.79 L53.16,70.55 L54.01,69.32 L54.89,68.09 L55.81,66.88 L56.77,65.67 L57.76,64.48 L58.79,63.29 L59.86,62.12 L60.96,60.96 L62.10,59.80 L63.27,58.66 L64.48,57.53 L65.72,56.42 L66.99,55.31 L68.30,54.22 L69.64,53.14 L71.01,52.08 L72.42,51.03 L73.86,49.99 L75.33,48.97 L76.83,47.96 L78.36,46.97 L79.92,45.99 L81.50,45.03 L83.12,44.09 L84.77,43.16 L86.44,42.25 L88.15,41.35 L89.88,40.48 L91.63,39.62 L93.41,38.77 L95.22,37.95 L97.05,37.14 L98.91,36.35 L100.79,35.59 L102.69,34.84 L104.62,34.10 L106.56,33.39 L108.53,32.70 L110.52,32.03 L112.53,31.38 L114.56,30.74 L116.61,30.13 L118.67,29.54 L120.76,28.97 L122.86,28.42 L124.98,27.89 L127.11,27.39 L129.26,26.90 L131.42,26.44 L133.60,26.00 L135.79,25.58 L137.99,25.18 L140.20,24.80 L142.43,24.45 L144.66,24.12 L146.91,23.81 L149.16,23.52 L151.43,23.26 L153.70,23.02 L155.97,22.80 L158.26,22.60 L160.55,22.43 L162.84,22.28 L165.14,22.15 L167.44,22.05 L169.74,21.97 L172.05,21.91 L174.36,21.87 L176.67,21.86 L178.98,21.87 L181.29,21.91 L183.59,21.97 L185.90,22.05 L188.20,22.15 L190.50,22.28 L192.79,22.43 L195.08,22.60 L197.36,22.80 L199.64,23.02 L201.91,23.26 L204.17,23.52 L206.43,23.81 L208.67,24.12 L210.91,24.45 L213.13,24.80 L215.35,25.18 L217.55,25.58 L219.74,26.00 L221.92,26.44 L224.08,26.90 L226.23,27.39 L228.36,27.89 L230.48,28.42 L232.58,28.97 L234.66,29.54 L236.73,30.13 L238.78,30.74 L240.81,31.38 L242.82,32.03 L244.80,32.70 L246.77,33.39 L248.72,34.10 L250.65,34.84 L252.55,35.59 L254.43,36.35 L256.28,37.14 L258.12,37.95 L259.92,38.77 L261.71,39.62 L263.46,40.48 L265.19,41.35 L266.89,42.25 L268.57,43.16 L270.21,44.09 L271.83,45.03 L273.42,45.99 L274.98,46.97 L276.51,47.96 L278.01,48.97 L279.48,49.99 L280.92,51.03 L282.32,52.08 L283.70,53.14 L285.04,54.22 L286.34,55.31 L287.62,56.42 L288.86,57.53 L290.07,58.66 L291.24,59.80 L292.37,60.96 L293.48,62.12 L294.54,63.29 L295.57,64.48 L296.57,65.67 L297.52,66.88 L298.45,68.09 L299.33,69.32 L300.18,70.55 L300.98,71.79 L301.75,73.04 L302.49,74.29 L303.18,75.56 L303.84,76.83 L304.45,78.10 L305.03,79.39 L305.57,80.67 L306.07,81.97 L306.53,83.26 L306.95,84.57 L307.33,85.87 L307.67,87.18 L307.98,88.50 L308.24,89.81 L308.46,91.13 L308.64,92.45 L308.78,93.77 L308.88,95.10 L308.94,96.42 L308.96,97.74 L308.94,99.07 L308.88,100.39 L308.78,101.71 L308.64,103.04 L308.46,104.36 L308.24,105.67 L307.98,106.99 L307.67,108.30 L307.33,109.61 L306.95,110.92 L306.53,112.22 L306.07,113.52 L305.57,114.81 L305.03,116.10 L304.45,117.38 L303.84,118.66 L303.18,119.93 L302.49,121.19 L301.75,122.45 L300.98,123.70 L300.18,124.94 L299.33,126.17 L298.45,127.39 L297.52,128.61 L296.57,129.81 Z" fill="#16a085" fill-rule="evenodd"/>
<line x1="176.67" y1="137.21" x2="296.57" y2="169.28" stroke="#808080" stroke-width="0.42"/>
<line x1="176.67" y1="137.21" x2="232.58" y2="68.44" stroke="#808080" stroke-width="0.42"/>
<line x1="176.67" y1="137.21" x2="56.77" y2="105.15" stroke="#808080" stroke-width="0.42" stroke-dasharray="1.0,1.2"/>
<line x1="176.67" y1="137.21" x2="120.76" y2="205.98" stroke="#808080" stroke-width="0.42" stroke-dasharray="1.0,1.2"/>
<line x1="176.67" y1="137.21" x2="176.67" y2="-1272.46" stroke="#b8b8b8" stroke-width="0.70"/>
<line x1="176.67" y1="137.21" x2="176.67" y2="1546.88" stroke="#c8c8c8" stroke-width="0.70" stroke-dasharray="1.0,1.2"/>
<line x1="215.66" y1="147.64" x2="211.48" y2="152.79" stroke="#808080" stroke-width="0.42"/>
<line x1="194.85" y1="114.85" x2="185.88" y2="112.45" stroke="#808080" stroke-width="0.42"/>
<line x1="137.68" y1="126.79" x2="133.50" y2="131.93" stroke="#808080" stroke-width="0.42"/>
<line x1="158.49" y1="159.58" x2="149.52" y2="157.18" stroke="#808080" stroke-width="0.42"/>
<line x1="176.67" y1="101.97" x2="167.70" y2="99.57" stroke="#808080" stroke-width="0.42"/>
<line x1="254.65" y1="158.07" x2="250.47" y2="163.22" stroke="#808080" stroke-width="0.42"/>
<line x1="213.03" y1="92.48" x2="204.06" y2="90.09" stroke="#808080" stroke-width="0.42"/>
<line x1="98.69" y1="116.36" x2="94.50" y2="121.50" stroke="#808080" stroke-width="0.42"/>
<line x1="140.30" y1="181.94" x2="131.34" y2="179.54" stroke="#808080" stroke-width="0.42"/>
<line x1="176.67" y1="66.73" x2="167.70" y2="64.33" stroke="#808080" stroke-width="0.42"/>
<line x1="293.64" y1="168.50" x2="289.46" y2="173.64" stroke="#808080" stroke-width="0.42"/>
<line x1="231.21" y1="70.12" x2="222.25" y2="67.72" stroke="#808080" stroke-width="0.42"/>
<line x1="59.69" y1="105.93" x2="55.51" y2="111.07" stroke="#808080" stroke-width="0.42"/>
<line x1="122.12" y1="204.31" x2="113.15" y2="201.91" stroke="#808080" stroke-width="0.42"/>
<line x1="176.67" y1="31.49" x2="167.70" y2="29.09" stroke="#808080" stroke-width="0.42"/>
<line x1="176.67" y1="-3.75" x2="167.70" y2="-6.15" stroke="#808080" stroke-width="0.42"/>
<line x1="176.67" y1="-38.99" x2="164.19" y2="-42.33" stroke="#808080" stroke-width="0.42"/>
<line x1="176.67" y1="-74.24" x2="167.70" y2="-76.64" stroke="#808080" stroke-width="0.42"/>
<line x1="176.67" y1="-109.48" x2="167.70" y2="-111.88" stroke="#808080" stroke-width="0.42"/>
<path d="M80.90,106.70L85.97,108.06M91.04,105.33L96.11,106.68M96.11,106.68L93.38,110.04M88.31,108.68L93.38,110.04M85.58,112.04L88.31,108.68M85.58,112.04L90.65,113.39M98.45,107.31L103.52,108.66M103.52,108.66L100.79,112.02M100.79,112.02L98.06,115.37M92.99,114.02L98.06,115.37M92.99,114.02L95.72,110.66M95.72,110.66L98.45,107.31" stroke="#808080" stroke-width="0.40" fill="none" stroke-linecap="round"/>
<path d="M147.74,184.48L145.38,187.38M150.13,190.29L147.77,193.20M147.77,193.20L141.92,191.63M144.28,188.73L141.92,191.63M138.44,187.16L144.28,188.73M138.44,187.16L136.07,190.07M146.68,194.54L144.32,197.45M144.32,197.45L138.47,195.88M138.47,195.88L132.62,194.32M134.98,191.41L132.62,194.32M134.98,191.41L140.83,192.97M140.83,192.97L146.68,194.54" stroke="#808080" stroke-width="0.40" fill="none" stroke-linecap="round"/>
<path d="M261.82,151.00L266.89,152.36M266.89,152.36L264.16,155.71M259.09,154.36L264.16,155.71M256.37,157.71L259.09,154.36M256.37,157.71L261.44,159.07M269.23,152.99L274.30,154.34M274.30,154.34L271.57,157.70M271.57,157.70L268.84,161.05M263.77,159.69L268.84,161.05M263.77,159.69L266.50,156.34M266.50,156.34L269.23,152.99" stroke="#808080" stroke-width="0.40" fill="none" stroke-linecap="round"/>
<path d="M233.95,87.19L231.59,90.10M231.59,90.10L225.74,88.53M228.10,85.62L225.74,88.53M222.25,84.06L228.10,85.62M222.25,84.06L219.89,86.97M230.50,91.44L228.13,94.35M228.13,94.35L222.29,92.78M222.29,92.78L216.44,91.22M218.80,88.31L216.44,91.22M218.80,88.31L224.65,89.87M224.65,89.87L230.50,91.44" stroke="#808080" stroke-width="0.40" fill="none" stroke-linecap="round"/>
<path d="M184.27,352.46L184.27,357.04M190.12,360.72L190.12,365.30M184.27,359.16L190.12,360.72M184.27,359.16L184.27,363.74M178.42,357.59L184.27,359.16M178.42,357.59L178.42,362.17M184.27,363.74L178.42,362.17M190.12,367.42L190.12,372.00M190.12,372.00L184.27,370.43M184.27,370.43L178.42,368.87M178.42,364.29L178.42,368.87M178.42,364.29L184.27,365.85M184.27,365.85L190.12,367.42" stroke="#808080" stroke-width="0.40" fill="none" stroke-linecap="round"/>
<path d="M184.27,281.98L184.27,286.56M184.27,288.67L190.12,290.24M184.27,288.67L184.27,293.25M190.12,294.82L184.27,293.25M184.27,293.25L178.42,291.69M190.12,296.93L190.12,301.51M190.12,301.51L184.27,299.95M184.27,299.95L178.42,298.39M178.42,293.80L178.42,298.39M178.42,293.80L184.27,295.37M184.27,295.37L190.12,296.93" stroke="#808080" stroke-width="0.40" fill="none" stroke-linecap="round"/>
<path d="M184.27,211.49L184.27,216.07M190.12,219.75L190.12,224.33M190.12,224.33L184.27,222.77M184.27,218.19L184.27,222.77M178.42,216.62L184.27,218.19M178.42,216.62L178.42,221.21M190.12,226.45L190.12,231.03M190.12,231.03L184.27,229.47M184.27,229.47L178.42,227.90M178.42,223.32L178.42,227.90M178.42,223.32L184.27,224.89M184.27,224.89L190.12,226.45" stroke="#808080" stroke-width="0.40" fill="none" stroke-linecap="round"/>
<path d="M190.12,61.17L190.12,65.75M190.12,65.75L184.27,64.18M184.27,59.60L184.27,64.18M178.42,58.04L184.27,59.60M178.42,58.04L178.42,62.62M190.12,67.86L190.12,72.44M190.12,72.44L184.27,70.88M184.27,70.88L178.42,69.31M178.42,64.73L178.42,69.31M178.42,64.73L184.27,66.30M184.27,66.30L190.12,67.86" stroke="#808080" stroke-width="0.40" fill="none" stroke-linecap="round"/>
<path d="M184.27,-10.88L190.12,-9.32M184.27,-10.88L184.27,-6.30M190.12,-4.74L184.27,-6.30M184.27,-6.30L178.42,-7.87M190.12,-2.62L190.12,1.96M190.12,1.96L184.27,0.40M184.27,0.40L178.42,-1.17M178.42,-5.75L178.42,-1.17M178.42,-5.75L184.27,-4.19M184.27,-4.19L190.12,-2.62" stroke="#808080" stroke-width="0.40" fill="none" stroke-linecap="round"/>
<path d="M190.12,-79.80L190.12,-75.22M184.27,-81.37L190.12,-79.80M184.27,-81.37L184.27,-76.78M178.42,-82.93L184.27,-81.37M178.42,-82.93L178.42,-78.35M184.27,-76.78L178.42,-78.35M190.12,-73.11L190.12,-68.52M190.12,-68.52L184.27,-70.09M184.27,-70.09L178.42,-71.65M178.42,-76.23L178.42,-71.65M178.42,-76.23L184.27,-74.67M184.27,-74.67L190.12,-73.11" stroke="#808080" stroke-width="0.40" fill="none" stroke-linecap="round"/>
<polygon points="103.46,125.67 114.19,112.47 114.19,89.21 103.46,102.41" fill="#0f6a58" stroke="#0f6a58" stroke-width="0.3"/>
<polygon points="103.46,102.41 103.36,100.51 114.09,87.32 114.19,89.21" fill="#0e6453"/>
<polygon points="103.39,101.14 103.09,99.22 113.82,86.02 114.12,87.95" fill="#0c5648"/>
<polygon points="103.19,99.86 102.69,97.91 113.42,84.72 113.92,86.66" fill="#0a493c"/>
<polygon points="102.86,98.56 102.16,96.62 112.89,83.42 113.58,85.37" fill="#083a31"/>
<polygon points="102.39,97.27 101.51,95.34 112.24,82.15 113.12,84.07" fill="#062c25"/>
<polygon points="101.80,95.98 100.74,94.10 111.47,80.90 112.53,82.79" fill="#05231d"/>
<polygon points="101.09,94.72 99.86,92.90 110.59,79.70 111.82,81.53" fill="#073129"/>
<polygon points="100.27,93.51 98.89,91.75 109.61,78.56 111.00,80.31" fill="#093f35"/>
<polygon points="99.35,92.34 97.82,90.67 108.54,77.48 110.08,79.14" fill="#0b4e40"/>
<polygon points="98.33,91.23 96.67,89.67 107.40,76.47 109.06,78.03" fill="#0d5b4c"/>
<polygon points="97.22,90.19 95.45,88.75 106.18,75.56 107.95,76.99" fill="#0e6857"/>
<polygon points="96.04,89.23 94.17,87.93 104.90,74.74 106.77,76.04" fill="#107561"/>
<polygon points="94.79,88.37 92.85,87.22 103.58,74.02 105.52,75.17" fill="#12806b"/>
<polygon points="93.50,87.60 91.49,86.61 102.22,73.42 104.22,74.41" fill="#138b73"/>
<polygon points="92.16,86.94 90.12,86.12 100.84,72.92 102.89,73.75" fill="#14947b"/>
<polygon points="90.80,86.39 88.73,85.75 99.46,72.55 101.53,73.20" fill="#169d82"/>
<polygon points="51.96,75.94 89.42,85.96 100.15,72.77 62.69,62.75" fill="#16a085" stroke="#16a085" stroke-width="0.3"/>
<g clip-path="url(#c4)">
<polygon points="78.58,101.34 110.55,109.89 110.55,77.47 78.58,68.92" fill="#7d8c7d" stroke="#7d8c7d" stroke-width="0.3"/>
<polygon points="75.12,105.59 78.58,101.34 78.58,72.45 75.12,76.69" fill="#91a291" stroke="#91a291" stroke-width="0.3"/>
<polygon points="75.12,105.59 107.10,114.14 110.55,109.89 78.58,101.34" fill="#dbf4da" stroke="#dbf4da" stroke-width="0.3"/>
</g>
<polygon points="51.96,111.89 103.46,125.67 103.46,102.41 103.46,102.41 103.39,101.14 103.19,99.86 102.86,98.56 102.39,97.27 101.80,95.98 101.09,94.72 100.27,93.51 99.35,92.34 98.33,91.23 97.22,90.19 96.04,89.23 94.79,88.37 93.50,87.60 92.16,86.94 90.80,86.39 89.42,85.96 51.96,75.94" fill="#0d5c4c" stroke="#0d5c4c" stroke-width="0.3"/>
<g clip-path="url(#c5)">
<polygon points="95.66,100.32 95.58,99.42 95.36,98.50 94.98,97.58 94.47,96.69 93.83,95.84 93.09,95.07 92.26,94.39 91.35,93.80 90.40,93.34 89.42,93.01 88.45,92.82 87.50,92.77 86.59,92.87 85.76,93.11 85.01,93.48 84.38,93.99 83.86,94.60 83.49,95.32 83.26,96.12 83.18,96.98 83.26,97.89 83.49,98.81 83.86,99.72 84.38,100.62 85.01,101.46 85.76,102.23 86.59,102.92 87.50,103.50 88.45,103.96 89.42,104.29 90.40,104.48 91.35,104.53 92.26,104.43 93.09,104.19 93.83,103.82 94.47,103.32 94.98,102.70 95.36,101.98 95.58,101.18" fill="#657165"/>
<polygon points="85.76,102.23 86.59,102.92 97.32,89.72 96.48,89.04" fill="#8d9d8c" stroke="#8d9d8c" stroke-width="0.3"/>
<polygon points="86.59,102.92 87.50,103.50 98.22,90.30 97.32,89.72" fill="#a8bba7" stroke="#a8bba7" stroke-width="0.3"/>
<polygon points="85.01,101.46 85.76,102.23 96.48,89.04 95.74,88.26" fill="#707d6f" stroke="#707d6f" stroke-width="0.3"/>
<polygon points="87.50,103.50 88.45,103.96 99.17,90.76 98.22,90.30" fill="#bfd5be" stroke="#bfd5be" stroke-width="0.3"/>
<polygon points="84.38,100.62 85.01,101.46 95.74,88.26 95.10,87.42" fill="#515a51" stroke="#515a51" stroke-width="0.3"/>
<polygon points="88.45,103.96 89.42,104.29 100.15,91.10 99.17,90.76" fill="#d3ecd2" stroke="#d3ecd2" stroke-width="0.3"/>
<polygon points="83.86,99.72 84.38,100.62 95.10,87.42 94.59,86.53" fill="#313731" stroke="#313731" stroke-width="0.3"/>
<polygon points="89.42,104.29 90.40,104.48 101.13,91.29 100.15,91.10" fill="#dbf4da" stroke="#dbf4da" stroke-width="0.3"/>
<polygon points="83.49,98.81 83.86,99.72 94.59,86.53 94.22,85.61" fill="#464e46" stroke="#464e46" stroke-width="0.3"/>
<polygon points="90.40,104.48 91.35,104.53 102.08,91.33 101.13,91.29" fill="#dbf4da" stroke="#dbf4da" stroke-width="0.3"/>
<polygon points="83.26,97.89 83.49,98.81 94.22,85.61 93.99,84.69" fill="#657165" stroke="#657165" stroke-width="0.3"/>
<polygon points="91.35,104.53 92.26,104.43 102.98,91.24 102.08,91.33" fill="#dbf4da" stroke="#dbf4da" stroke-width="0.3"/>
<polygon points="83.18,96.98 83.26,97.89 93.99,84.69 93.91,83.79" fill="#839283" stroke="#839283" stroke-width="0.3"/>
<polygon points="92.26,104.43 93.09,104.19 103.82,91.00 102.98,91.24" fill="#dbf4da" stroke="#dbf4da" stroke-width="0.3"/>
<polygon points="83.26,96.12 83.18,96.98 93.91,83.79 93.99,82.93" fill="#9fb19e" stroke="#9fb19e" stroke-width="0.3"/>
<polygon points="93.09,104.19 93.83,103.82 104.56,90.62 103.82,91.00" fill="#dbf4da" stroke="#dbf4da" stroke-width="0.3"/>
<polygon points="83.49,95.32 83.26,96.12 93.99,82.93 94.22,82.13" fill="#b8cdb7" stroke="#b8cdb7" stroke-width="0.3"/>
<polygon points="93.83,103.82 94.47,103.32 105.20,90.12 104.56,90.62" fill="#dbf4da" stroke="#dbf4da" stroke-width="0.3"/>
<polygon points="83.86,94.60 83.49,95.32 94.22,82.13 94.59,81.41" fill="#cde4cc" stroke="#cde4cc" stroke-width="0.3"/>
<polygon points="94.47,103.32 94.98,102.70 105.71,89.50 105.20,90.12" fill="#dbf4da" stroke="#dbf4da" stroke-width="0.3"/>
<polygon points="106.39,87.13 106.31,86.22 106.08,85.30 105.71,84.38 105.20,83.49 104.56,82.65 103.82,81.88 102.98,81.19 102.08,80.61 101.13,80.15 100.15,79.82 99.17,79.63 98.22,79.58 97.32,79.67 96.48,79.91 95.74,80.29 95.10,80.79 94.59,81.41 94.22,82.13 93.99,82.93 93.91,83.79 93.99,84.69 94.22,85.61 94.59,86.53 95.10,87.42 95.74,88.26 96.48,89.04 97.32,89.72 98.22,90.30 99.17,90.76 100.15,91.10 101.13,91.29 102.08,91.33 102.98,91.24 103.82,91.00 104.56,90.62 105.20,90.12 105.71,89.50 106.08,88.79 106.31,87.99" fill="#c9d8c4"/>
</g>
<polygon points="241.52,132.28 242.75,131.11 253.47,117.92 252.24,119.09" fill="#16a085"/>
<polygon points="242.34,131.50 243.72,130.49 254.45,117.29 253.06,118.31" fill="#16a085"/>
<polygon points="243.26,130.83 244.79,129.98 255.52,116.79 253.99,117.63" fill="#16a085"/>
<polygon points="244.28,130.26 245.94,129.59 256.67,116.40 255.01,117.07" fill="#16a085"/>
<polygon points="245.39,129.82 247.16,129.33 257.89,116.14 256.12,116.62" fill="#16a085"/>
<polygon points="246.57,129.49 248.44,129.19 259.17,116.00 257.30,116.30" fill="#16a085"/>
<polygon points="247.82,129.29 249.76,129.19 260.49,115.99 258.54,116.10" fill="#16a085"/>
<polygon points="249.11,129.22 251.12,129.30 261.84,116.11 259.84,116.03" fill="#16a085"/>
<polygon points="250.45,129.28 252.49,129.55 263.22,116.35 261.18,116.08" fill="#16a085"/>
<polygon points="251.81,129.46 253.87,129.92 264.60,116.72 262.54,116.26" fill="#16a085"/>
<polygon points="290.65,139.79 253.19,129.77 263.91,116.57 301.38,126.59" fill="#16a085" stroke="#16a085" stroke-width="0.3"/>
<g clip-path="url(#c6)">
<polygon points="278.21,154.74 246.24,146.19 246.24,113.76 278.21,122.32" fill="#7d8c7d" stroke="#7d8c7d" stroke-width="0.3"/>
<polygon points="274.76,158.99 278.21,154.74 278.21,125.84 274.76,130.09" fill="#91a291" stroke="#91a291" stroke-width="0.3"/>
<polygon points="274.76,158.99 242.79,150.44 246.24,146.19 278.21,154.74" fill="#dbf4da" stroke="#dbf4da" stroke-width="0.3"/>
</g>
<polygon points="290.65,175.73 239.15,161.96 239.15,138.70 239.15,138.70 239.22,137.47 239.42,136.30 239.75,135.18 240.22,134.13 240.81,133.16 241.52,132.28 242.34,131.50 243.26,130.83 244.28,130.26 245.39,129.82 246.57,129.49 247.82,129.29 249.11,129.22 250.45,129.28 251.81,129.46 253.19,129.77 290.65,139.79" fill="#0d5c4c" stroke="#0d5c4c" stroke-width="0.3"/>
<g clip-path="url(#c7)">
<polygon points="259.43,144.12 259.35,143.22 259.12,142.30 258.75,141.38 258.23,140.49 257.60,139.65 256.85,138.87 256.02,138.19 255.11,137.61 254.16,137.14 253.19,136.81 252.21,136.62 251.26,136.57 250.35,136.67 249.52,136.91 248.78,137.29 248.14,137.79 247.63,138.41 247.25,139.12 247.02,139.92 246.95,140.78 247.02,141.69 247.25,142.61 247.63,143.53 248.14,144.42 248.78,145.26 249.52,146.03 250.35,146.72 251.26,147.30 252.21,147.76 253.19,148.09 254.16,148.28 255.11,148.33 256.02,148.23 256.85,147.99 257.60,147.62 258.23,147.12 258.75,146.50 259.12,145.78 259.35,144.98" fill="#657165"/>
<polygon points="249.52,146.03 250.35,146.72 261.08,133.52 260.25,132.84" fill="#8d9d8c" stroke="#8d9d8c" stroke-width="0.3"/>
<polygon points="250.35,146.72 251.26,147.30 261.99,134.10 261.08,133.52" fill="#a8bba7" stroke="#a8bba7" stroke-width="0.3"/>
<polygon points="248.78,145.26 249.52,146.03 260.25,132.84 259.50,132.06" fill="#707d6f" stroke="#707d6f" stroke-width="0.3"/>
<polygon points="251.26,147.30 252.21,147.76 262.94,134.57 261.99,134.10" fill="#bfd5be" stroke="#bfd5be" stroke-width="0.3"/>
<polygon points="248.14,144.42 248.78,145.26 259.50,132.06 258.87,131.22" fill="#515a51" stroke="#515a51" stroke-width="0.3"/>
<polygon points="252.21,147.76 253.19,148.09 263.91,134.90 262.94,134.57" fill="#d3ecd2" stroke="#d3ecd2" stroke-width="0.3"/>
<polygon points="247.63,143.53 248.14,144.42 258.87,131.22 258.36,130.33" fill="#313731" stroke="#313731" stroke-width="0.3"/>
<polygon points="253.19,148.09 254.16,148.28 264.89,135.09 263.91,134.90" fill="#dbf4da" stroke="#dbf4da" stroke-width="0.3"/>
<polygon points="247.25,142.61 247.63,143.53 258.36,130.33 257.98,129.41" fill="#464e46" stroke="#464e46" stroke-width="0.3"/>
<polygon points="254.16,148.28 255.11,148.33 265.84,135.14 264.89,135.09" fill="#dbf4da" stroke="#dbf4da" stroke-width="0.3"/>
<polygon points="247.02,141.69 247.25,142.61 257.98,129.41 257.75,128.49" fill="#657165" stroke="#657165" stroke-width="0.3"/>
<polygon points="255.11,148.33 256.02,148.23 266.75,135.04 265.84,135.14" fill="#dbf4da" stroke="#dbf4da" stroke-width="0.3"/>
<polygon points="246.95,140.78 247.02,141.69 257.75,128.49 257.68,127.59" fill="#839283" stroke="#839283" stroke-width="0.3"/>
<polygon points="256.02,148.23 256.85,147.99 267.58,134.80 266.75,135.04" fill="#dbf4da" stroke="#dbf4da" stroke-width="0.3"/>
<polygon points="247.02,139.92 246.95,140.78 257.68,127.59 257.75,126.73" fill="#9fb19e" stroke="#9fb19e" stroke-width="0.3"/>
<polygon points="256.85,147.99 257.60,147.62 268.33,134.42 267.58,134.80" fill="#dbf4da" stroke="#dbf4da" stroke-width="0.3"/>
<polygon points="247.25,139.12 247.02,139.92 257.75,126.73 257.98,125.93" fill="#b8cdb7" stroke="#b8cdb7" stroke-width="0.3"/>
<polygon points="257.60,147.62 258.23,147.12 268.96,133.92 268.33,134.42" fill="#dbf4da" stroke="#dbf4da" stroke-width="0.3"/>
<polygon points="247.63,138.41 247.25,139.12 257.98,125.93 258.36,125.21" fill="#cde4cc" stroke="#cde4cc" stroke-width="0.3"/>
<polygon points="258.23,147.12 258.75,146.50 269.47,133.30 268.96,133.92" fill="#dbf4da" stroke="#dbf4da" stroke-width="0.3"/>
<polygon points="270.15,130.93 270.08,130.02 269.85,129.10 269.47,128.18 268.96,127.29 268.33,126.45 267.58,125.68 266.75,124.99 265.84,124.41 264.89,123.95 263.91,123.62 262.94,123.43 261.99,123.38 261.08,123.48 260.25,123.71 259.50,124.09 258.87,124.59 258.36,125.21 257.98,125.93 257.75,126.73 257.68,127.59 257.75,128.49 257.98,129.41 258.36,130.33 258.87,131.22 259.50,132.06 260.25,132.84 261.08,133.52 261.99,134.10 262.94,134.57 263.91,134.90 264.89,135.09 265.84,135.14 266.75,135.04 267.58,134.80 268.33,134.42 268.96,133.92 269.47,133.30 269.85,132.59 270.08,131.79" fill="#c9d8c4"/>
</g>
<polygon points="304.37,171.37 309.25,164.56 309.25,125.09 304.37,131.90" fill="#0f6c5a"/>
<polygon points="307.85,166.70 311.99,159.73 311.99,120.26 307.85,127.23" fill="#0f6f5d"/>
<polygon points="310.82,161.92 314.18,154.82 314.18,115.35 310.82,122.45" fill="#10735f"/>
<polygon points="313.26,157.04 315.84,149.83 315.84,110.36 313.26,117.57" fill="#107562"/>
<polygon points="315.16,152.08 316.95,144.79 316.95,105.32 315.16,112.61" fill="#107864"/>
<polygon points="316.52,147.06 317.50,139.72 317.50,100.25 316.52,107.59" fill="#117a65"/>
<polygon points="317.32,142.01 317.50,134.65 317.50,95.18 317.32,102.54" fill="#117c67"/>
<polygon points="35.77,137.50 36.40,144.85 36.40,105.38 35.77,98.03" fill="#117d68"/>
<polygon points="36.08,142.57 37.51,149.88 37.51,110.41 36.08,103.10" fill="#117e69"/>
<polygon points="36.94,147.62 39.17,154.87 39.17,115.40 36.94,108.15" fill="#117f69"/>
<polygon points="38.36,152.63 41.38,159.79 41.38,120.32 38.36,113.16" fill="#117f6a"/>
<polygon points="40.32,157.59 44.12,164.62 44.12,125.15 40.32,118.11" fill="#117f6a"/>
<polygon points="42.82,162.46 47.38,169.34 47.38,129.86 42.82,122.98" fill="#117f69"/>
<polygon points="45.85,167.23 51.15,173.93 51.15,134.46 45.85,127.76" fill="#117e69"/>
<polygon points="49.39,171.88 55.42,178.38 55.42,138.91 49.39,132.41" fill="#117d68"/>
<polygon points="53.44,176.39 60.16,182.66 60.16,143.19 53.44,136.92" fill="#117b66"/>
<polygon points="57.97,180.76 65.37,186.77 65.37,147.30 57.97,141.28" fill="#117965"/>
<polygon points="62.97,184.94 71.01,190.68 71.01,151.21 62.97,145.47" fill="#107763"/>
<polygon points="68.42,188.94 77.07,194.38 77.07,154.91 68.42,149.47" fill="#107461"/>
<polygon points="74.30,192.74 83.53,197.85 83.53,158.38 74.30,153.27" fill="#10715e"/>
<polygon points="80.58,196.32 90.35,201.09 90.35,161.62 80.58,156.85" fill="#0f6e5b"/>
<polygon points="87.24,199.66 97.51,204.07 97.51,164.60 87.24,160.19" fill="#0f6a58"/>
<polygon points="94.25,202.76 104.99,206.79 104.99,167.32 94.25,163.29" fill="#0e6655"/>
<polygon points="101.59,205.60 112.75,209.23 112.75,169.76 101.59,166.13" fill="#0e6252"/>
<polygon points="109.22,208.17 120.76,211.39 120.76,171.92 109.22,168.70" fill="#0d5e4e"/>
<polygon points="117.12,210.46 128.99,213.26 128.99,173.79 117.12,170.99" fill="#0c594a"/>
<polygon points="125.26,212.46 137.41,214.83 137.41,175.36 125.26,172.99" fill="#0c5446"/>
<polygon points="133.60,214.16 145.98,216.09 145.98,176.62 133.60,174.69" fill="#0b4f42"/>
<polygon points="142.11,215.56 154.68,217.04 154.68,177.57 142.11,176.09" fill="#0a4a3e"/>
<polygon points="150.75,216.65 163.46,217.67 163.46,178.20 150.75,177.18" fill="#094539"/>
<polygon points="159.50,217.43 172.29,217.99 172.29,178.52 159.50,177.96" fill="#093f34"/>
<polygon points="168.31,217.89 181.14,217.99 181.14,178.52 168.31,178.42" fill="#083930"/>
<polygon points="177.16,218.03 189.98,217.67 189.98,178.20 177.16,178.56" fill="#07332b"/>
<polygon points="186.01,217.85 198.76,217.03 198.76,177.56 186.01,178.38" fill="#062e26"/>
<polygon points="194.82,217.36 207.45,216.08 207.45,176.61 194.82,177.89" fill="#052821"/>
<polygon points="203.55,216.54 216.02,214.81 216.02,175.34 203.55,177.07" fill="#05221c"/>
<polygon points="212.18,215.42 224.44,213.24 224.44,173.77 212.18,175.95" fill="#05241e"/>
<polygon points="220.68,213.99 232.67,211.37 232.67,171.90 220.68,174.52" fill="#062a23"/>
<polygon points="228.99,212.25 240.68,209.21 240.68,169.74 228.99,172.78" fill="#073028"/>
<polygon points="237.10,210.22 248.43,206.76 248.43,167.29 237.10,170.75" fill="#07362d"/>
<polygon points="244.98,207.90 255.91,204.04 255.91,164.57 244.98,168.43" fill="#083c32"/>
<polygon points="252.58,205.30 263.06,201.05 263.06,161.58 252.58,165.83" fill="#094136"/>
<polygon points="259.88,202.43 269.88,197.82 269.88,158.35 259.88,162.96" fill="#0a473b"/>
<polygon points="266.86,199.30 276.33,194.34 276.33,154.87 266.86,159.83" fill="#0b4c3f"/>
<polygon points="273.48,195.93 282.39,190.64 282.39,151.17 273.48,156.46" fill="#0b5244"/>
<polygon points="279.71,192.33 288.03,186.72 288.03,147.25 279.71,152.86" fill="#0c5748"/>
<polygon points="285.54,188.51 293.23,182.62 293.23,143.15 285.54,149.04" fill="#0d5b4c"/>
<polygon points="290.95,184.49 297.97,178.33 297.97,138.86 290.95,145.02" fill="#0d6050"/>
<polygon points="295.90,180.28 302.23,173.88 302.23,134.41 295.90,140.81" fill="#0e6453"/>
<polygon points="300.37,175.90 306.00,169.28 306.00,129.81 300.37,136.43" fill="#0e6857"/>
<g clip-path="url(#c8)">
<polygon points="221.13,190.64 221.01,189.47 220.63,188.36 220.02,187.34 219.18,186.42 218.13,185.61 216.89,184.93 215.49,184.37 213.94,183.96 212.29,183.68 210.55,183.55 208.77,183.56 206.97,183.72 205.18,184.01 203.43,184.45 201.76,185.01 200.18,185.70 198.73,186.50 197.42,187.41 196.28,188.41 195.32,189.48 194.56,190.61 194.01,191.78 193.68,192.98 193.56,194.19 193.68,195.38 194.01,196.53 194.56,197.62 195.32,198.64 196.28,199.56 197.42,200.37 198.73,201.04 200.18,201.57 201.76,201.94 203.43,202.15 205.18,202.18 206.97,202.04 208.77,201.73 210.55,201.25 212.29,200.61 213.94,199.83 215.49,198.91 216.89,197.89 218.13,196.77 219.18,195.58 220.02,194.36 220.63,193.11 221.01,191.86" fill="#869585"/>
<polygon points="212.29,200.61 213.94,199.83 218.83,193.81 217.12,194.67" fill="#dbf4da" stroke="#dbf4da" stroke-width="0.3"/>
<polygon points="213.94,199.83 215.49,198.91 220.43,192.83 218.83,193.81" fill="#dbf4da" stroke="#dbf4da" stroke-width="0.3"/>
<polygon points="210.55,201.25 212.29,200.61 217.12,194.67 215.33,195.37" fill="#dbf4da" stroke="#dbf4da" stroke-width="0.3"/>
<polygon points="215.49,198.91 216.89,197.89 221.89,191.74 220.43,192.83" fill="#dbf4da" stroke="#dbf4da" stroke-width="0.3"/>
<polygon points="208.77,201.73 210.55,201.25 215.33,195.37 213.49,195.92" fill="#dbf4da" stroke="#dbf4da" stroke-width="0.3"/>
<polygon points="216.89,197.89 218.13,196.77 223.17,190.57 221.89,191.74" fill="#dbf4da" stroke="#dbf4da" stroke-width="0.3"/>
<polygon points="206.97,202.04 208.77,201.73 213.49,195.92 211.64,196.30" fill="#dbf4da" stroke="#dbf4da" stroke-width="0.3"/>
<polygon points="218.13,196.77 219.18,195.58 224.26,189.34 223.17,190.57" fill="#dbf4da" stroke="#dbf4da" stroke-width="0.3"/>
<polygon points="205.18,202.18 206.97,202.04 211.64,196.30 209.80,196.50" fill="#d5edd4" stroke="#d5edd4" stroke-width="0.3"/>
<polygon points="203.43,202.15 205.18,202.18 209.80,196.50 208.01,196.53" fill="#c5dbc4" stroke="#c5dbc4" stroke-width="0.3"/>
<polygon points="201.76,201.94 203.43,202.15 208.01,196.53 206.29,196.37" fill="#b2c6b1" stroke="#b2c6b1" stroke-width="0.3"/>
<polygon points="200.18,201.57 201.76,201.94 206.29,196.37 204.67,196.05" fill="#9daf9c" stroke="#9daf9c" stroke-width="0.3"/>
<polygon points="198.73,201.04 200.18,201.57 204.67,196.05 203.18,195.56" fill="#869585" stroke="#869585" stroke-width="0.3"/>
<polygon points="197.42,200.37 198.73,201.04 203.18,195.56 201.84,194.93" fill="#6d7a6d" stroke="#6d7a6d" stroke-width="0.3"/>
<polygon points="196.28,199.56 197.42,200.37 201.84,194.93 200.68,194.15" fill="#545d53" stroke="#545d53" stroke-width="0.3"/>
<polygon points="195.32,198.64 196.28,199.56 200.68,194.15 199.70,193.26" fill="#394039" stroke="#394039" stroke-width="0.3"/>
<polygon points="194.56,197.62 195.32,198.64 199.70,193.26 198.92,192.26" fill="#393f39" stroke="#393f39" stroke-width="0.3"/>
<polygon points="194.01,196.53 194.56,197.62 198.92,192.26 198.36,191.18" fill="#535d53" stroke="#535d53" stroke-width="0.3"/>
<polygon points="193.68,195.38 194.01,196.53 198.36,191.18 198.02,190.04" fill="#6d796c" stroke="#6d796c" stroke-width="0.3"/>
<polygon points="193.56,194.19 193.68,195.38 198.02,190.04 197.90,188.85" fill="#869585" stroke="#869585" stroke-width="0.3"/>
<polygon points="193.68,192.98 193.56,194.19 197.90,188.85 198.02,187.64" fill="#9dae9c" stroke="#9dae9c" stroke-width="0.3"/>
<polygon points="194.01,191.78 193.68,192.98 198.02,187.64 198.36,186.44" fill="#b2c6b1" stroke="#b2c6b1" stroke-width="0.3"/>
<polygon points="194.56,190.61 194.01,191.78 198.36,186.44 198.92,185.25" fill="#c4dbc4" stroke="#c4dbc4" stroke-width="0.3"/>
<polygon points="195.32,189.48 194.56,190.61 198.92,185.25 199.70,184.09" fill="#d5edd4" stroke="#d5edd4" stroke-width="0.3"/>
<polygon points="226.29,184.29 226.16,183.13 225.77,182.04 225.14,181.05 224.26,180.17 223.17,179.41 221.89,178.79 220.43,178.29 218.83,177.94 217.12,177.73 215.33,177.67 213.49,177.75 211.64,177.97 209.80,178.33 208.01,178.82 206.29,179.44 204.67,180.18 203.18,181.03 201.84,181.97 200.68,183.00 199.70,184.09 198.92,185.25 198.36,186.44 198.02,187.64 197.90,188.85 198.02,190.04 198.36,191.18 198.92,192.26 199.70,193.26 200.68,194.15 201.84,194.93 203.18,195.56 204.67,196.05 206.29,196.37 208.01,196.53 209.80,196.50 211.64,196.30 213.49,195.92 215.33,195.37 217.12,194.67 218.83,193.81 220.43,192.83 221.89,191.74 223.17,190.57 224.26,189.34 225.14,188.07 225.77,186.79 226.16,185.52" fill="#fafafa"/>
</g>
<g clip-path="url(#c9)">
<polygon points="77.56,174.92 77.52,174.16 77.40,173.37 77.19,172.55 76.91,171.73 76.56,170.91 76.14,170.12 75.66,169.35 75.14,168.63 74.59,167.97 74.00,167.38 73.40,166.87 72.79,166.44 72.18,166.11 71.59,165.87 71.03,165.74 70.49,165.72 70.00,165.81 69.56,166.00 69.18,166.29 68.85,166.69 68.60,167.17 68.41,167.74 68.30,168.39 68.26,169.10 68.30,169.86 68.41,170.66 68.60,171.49 68.85,172.33 69.18,173.16 69.56,173.97 70.00,174.75 70.49,175.49 71.03,176.16 71.59,176.77 72.18,177.29 72.79,177.72 73.40,178.05 74.00,178.27 74.59,178.39 75.14,178.40 75.66,178.30 76.14,178.09 76.56,177.78 76.91,177.37 77.19,176.87 77.40,176.29 77.52,175.63" fill="#768375"/>
<polygon points="69.18,173.16 69.56,173.97 75.91,170.64 75.53,169.82" fill="#717e70" stroke="#717e70" stroke-width="0.3"/>
<polygon points="69.56,173.97 70.00,174.75 76.35,171.42 75.91,170.64" fill="#879686" stroke="#879686" stroke-width="0.3"/>
<polygon points="68.85,172.33 69.18,173.16 75.53,169.82 75.20,168.99" fill="#5a6459" stroke="#5a6459" stroke-width="0.3"/>
<polygon points="70.00,174.75 70.49,175.49 76.84,172.15 76.35,171.42" fill="#9bad9b" stroke="#9bad9b" stroke-width="0.3"/>
<polygon points="68.60,171.49 68.85,172.33 75.20,168.99 74.95,168.15" fill="#424941" stroke="#424941" stroke-width="0.3"/>
<polygon points="70.49,175.49 71.03,176.16 77.37,172.83 76.84,172.15" fill="#aec2ad" stroke="#aec2ad" stroke-width="0.3"/>
<polygon points="68.41,170.66 68.60,171.49 74.95,168.15 74.76,167.33" fill="#2e342e" stroke="#2e342e" stroke-width="0.3"/>
<polygon points="71.03,176.16 71.59,176.77 77.94,173.43 77.37,172.83" fill="#bed4be" stroke="#bed4be" stroke-width="0.3"/>
<polygon points="68.30,169.86 68.41,170.66 74.76,167.33 74.65,166.52" fill="#474f46" stroke="#474f46" stroke-width="0.3"/>
<polygon points="71.59,176.77 72.18,177.29 78.53,173.95 77.94,173.43" fill="#cce4cb" stroke="#cce4cb" stroke-width="0.3"/>
<polygon points="68.26,169.10 68.30,169.86 74.65,166.52 74.61,165.76" fill="#5f695e" stroke="#5f695e" stroke-width="0.3"/>
<polygon points="72.18,177.29 72.79,177.72 79.13,174.38 78.53,173.95" fill="#d7f0d6" stroke="#d7f0d6" stroke-width="0.3"/>
<polygon points="68.30,168.39 68.26,169.10 74.61,165.76 74.65,165.05" fill="#768375" stroke="#768375" stroke-width="0.3"/>
<polygon points="72.79,177.72 73.40,178.05 79.74,174.71 79.13,174.38" fill="#dbf4da" stroke="#dbf4da" stroke-width="0.3"/>
<polygon points="68.41,167.74 68.30,168.39 74.65,165.05 74.76,164.41" fill="#8b9b8b" stroke="#8b9b8b" stroke-width="0.3"/>
<polygon points="73.40,178.05 74.00,178.27 80.34,174.94 79.74,174.71" fill="#dbf4da" stroke="#dbf4da" stroke-width="0.3"/>
<polygon points="68.60,167.17 68.41,167.74 74.76,164.41 74.95,163.84" fill="#a0b29f" stroke="#a0b29f" stroke-width="0.3"/>
<polygon points="74.00,178.27 74.59,178.39 80.93,175.06 80.34,174.94" fill="#dbf4da" stroke="#dbf4da" stroke-width="0.3"/>
<polygon points="68.85,166.69 68.60,167.17 74.95,163.84 75.20,163.35" fill="#b2c6b1" stroke="#b2c6b1" stroke-width="0.3"/>
<polygon points="74.59,178.39 75.14,178.40 81.49,175.06 80.93,175.06" fill="#dbf4da" stroke="#dbf4da" stroke-width="0.3"/>
<polygon points="69.18,166.29 68.85,166.69 75.20,163.35 75.53,162.96" fill="#c2d8c1" stroke="#c2d8c1" stroke-width="0.3"/>
<polygon points="75.14,178.40 75.66,178.30 82.01,174.96 81.49,175.06" fill="#dbf4da" stroke="#dbf4da" stroke-width="0.3"/>
<polygon points="69.56,166.00 69.18,166.29 75.53,162.96 75.91,162.66" fill="#cfe7ce" stroke="#cfe7ce" stroke-width="0.3"/>
<polygon points="75.66,178.30 76.14,178.09 82.49,174.75 82.01,174.96" fill="#d9f2d8" stroke="#d9f2d8" stroke-width="0.3"/>
<polygon points="83.91,171.58 83.87,170.82 83.75,170.03 83.54,169.21 83.26,168.39 82.90,167.58 82.49,166.78 82.01,166.02 81.49,165.30 80.93,164.64 80.34,164.04 79.74,163.53 79.13,163.10 78.53,162.77 77.94,162.54 77.37,162.41 76.84,162.39 76.35,162.47 75.91,162.66 75.53,162.96 75.20,163.35 74.95,163.84 74.76,164.41 74.65,165.05 74.61,165.76 74.65,166.52 74.76,167.33 74.95,168.15 75.20,168.99 75.53,169.82 75.91,170.64 76.35,171.42 76.84,172.15 77.37,172.83 77.94,173.43 78.53,173.95 79.13,174.38 79.74,174.71 80.34,174.94 80.93,175.06 81.49,175.06 82.01,174.96 82.49,174.75 82.90,174.44 83.26,174.03 83.54,173.53 83.75,172.95 83.87,172.30" fill="#fafafa"/>
</g>
<g clip-path="url(#c10)">
<polygon points="276.82,174.32 276.78,173.61 276.65,172.96 276.45,172.38 276.17,171.88 275.81,171.47 275.39,171.15 274.91,170.94 274.37,170.83 273.78,170.82 273.16,170.92 272.52,171.12 271.86,171.42 271.19,171.82 270.54,172.30 269.90,172.86 269.29,173.49 268.73,174.19 268.21,174.93 267.76,175.70 267.38,176.50 267.07,177.31 266.85,178.11 266.71,178.90 266.67,179.66 266.71,180.37 266.85,181.03 267.07,181.62 267.38,182.14 267.76,182.57 268.21,182.90 268.73,183.13 269.29,183.26 269.90,183.28 270.54,183.19 271.19,183.00 271.86,182.70 272.52,182.30 273.16,181.81 273.78,181.24 274.37,180.59 274.91,179.89 275.39,179.13 275.81,178.33 276.17,177.52 276.45,176.69 276.65,175.88 276.78,175.08" fill="#d4ecd3"/>
<polygon points="275.39,179.13 275.81,178.33 269.99,174.69 269.57,175.49" fill="#dbf4da" stroke="#dbf4da" stroke-width="0.3"/>
<polygon points="274.91,179.89 275.39,179.13 269.57,175.49 269.09,176.25" fill="#dbf4da" stroke="#dbf4da" stroke-width="0.3"/>
<polygon points="275.81,178.33 276.17,177.52 270.35,173.88 269.99,174.69" fill="#dbf4da" stroke="#dbf4da" stroke-width="0.3"/>
<polygon points="274.37,180.59 274.91,179.89 269.09,176.25 268.55,176.95" fill="#dbf4da" stroke="#dbf4da" stroke-width="0.3"/>
<polygon points="276.17,177.52 276.45,176.69 270.63,173.05 270.35,173.88" fill="#dbf4da" stroke="#dbf4da" stroke-width="0.3"/>
<polygon points="273.78,181.24 274.37,180.59 268.55,176.95 267.97,177.60" fill="#dbf4da" stroke="#dbf4da" stroke-width="0.3"/>
<polygon points="273.16,181.81 273.78,181.24 267.97,177.60 267.35,178.17" fill="#dbf4da" stroke="#dbf4da" stroke-width="0.3"/>
<polygon points="276.45,176.69 276.65,175.88 270.83,172.24 270.63,173.05" fill="#d1e8d0" stroke="#d1e8d0" stroke-width="0.3"/>
<polygon points="272.52,182.30 273.16,181.81 267.35,178.17 266.70,178.66" fill="#dbf4da" stroke="#dbf4da" stroke-width="0.3"/>
<polygon points="276.65,175.88 276.78,175.08 270.96,171.44 270.83,172.24" fill="#bed4bd" stroke="#bed4bd" stroke-width="0.3"/>
<polygon points="271.86,182.70 272.52,182.30 266.70,178.66 266.04,179.06" fill="#dbf4da" stroke="#dbf4da" stroke-width="0.3"/>
<polygon points="276.78,175.08 276.82,174.32 271.00,170.68 270.96,171.44" fill="#a9bda8" stroke="#a9bda8" stroke-width="0.3"/>
<polygon points="271.19,183.00 271.86,182.70 266.04,179.06 265.38,179.36" fill="#d4ecd3" stroke="#d4ecd3" stroke-width="0.3"/>
<polygon points="276.82,174.32 276.78,173.61 270.96,169.97 271.00,170.68" fill="#92a392" stroke="#92a392" stroke-width="0.3"/>
<polygon points="270.54,183.19 271.19,183.00 265.38,179.36 264.72,179.56" fill="#c2d8c1" stroke="#c2d8c1" stroke-width="0.3"/>
<polygon points="276.78,173.61 276.65,172.96 270.83,169.32 270.96,169.97" fill="#798779" stroke="#798779" stroke-width="0.3"/>
<polygon points="269.90,183.28 270.54,183.19 264.72,179.56 264.08,179.64" fill="#aec2ad" stroke="#aec2ad" stroke-width="0.3"/>
<polygon points="276.65,172.96 276.45,172.38 270.63,168.74 270.83,169.32" fill="#5f6a5f" stroke="#5f6a5f" stroke-width="0.3"/>
<polygon points="269.29,183.26 269.90,183.28 264.08,179.64 263.48,179.62" fill="#97a897" stroke="#97a897" stroke-width="0.3"/>
<polygon points="276.45,172.38 276.17,171.88 270.35,168.24 270.63,168.74" fill="#444c44" stroke="#444c44" stroke-width="0.3"/>
<polygon points="268.73,183.13 269.29,183.26 263.48,179.62 262.91,179.49" fill="#7f8d7e" stroke="#7f8d7e" stroke-width="0.3"/>
<polygon points="276.17,171.88 275.81,171.47 269.99,167.83 270.35,168.24" fill="#2f342e" stroke="#2f342e" stroke-width="0.3"/>
<polygon points="268.21,182.90 268.73,183.13 262.91,179.49 262.40,179.26" fill="#657064" stroke="#657064" stroke-width="0.3"/>
<polygon points="275.81,171.47 275.39,171.15 269.57,167.51 269.99,167.83" fill="#4a534a" stroke="#4a534a" stroke-width="0.3"/>
<polygon points="271.00,170.68 270.96,169.97 270.83,169.32 270.63,168.74 270.35,168.24 269.99,167.83 269.57,167.51 269.09,167.30 268.55,167.19 267.97,167.18 267.35,167.28 266.70,167.48 266.04,167.78 265.38,168.18 264.72,168.66 264.08,169.22 263.48,169.86 262.91,170.55 262.40,171.28 261.94,172.06 261.56,172.86 261.25,173.67 261.03,174.47 260.89,175.26 260.85,176.02 260.89,176.73 261.03,177.39 261.25,177.98 261.56,178.50 261.94,178.92 262.40,179.26 262.91,179.49 263.48,179.62 264.08,179.64 264.72,179.56 265.38,179.36 266.04,179.06 266.70,178.66 267.35,178.17 267.97,177.60 268.55,176.95 269.09,176.25 269.57,175.49 269.99,174.69 270.35,173.88 270.63,173.05 270.83,172.24 270.96,171.44" fill="#fafafa"/>
</g>
<polygon points="48.97,63.59 47.75,65.14 46.58,66.70 45.47,68.28 44.42,69.87 43.42,71.47 42.49,73.09 41.61,74.71 40.80,76.35 40.04,77.99 39.35,79.65 38.71,81.31 38.14,82.98 37.63,84.65 37.18,86.33 36.79,88.02 36.47,89.71 36.20,91.41 36.00,93.10 35.86,94.80 35.79,96.50 35.77,98.20 35.82,99.90 35.93,101.60 36.10,103.30 36.34,105.00 36.64,106.69 37.00,108.38 37.42,110.06 37.90,111.74 38.44,113.41 39.05,115.08 39.72,116.74 40.44,118.39 41.23,120.03 42.08,121.66 42.99,123.28 43.95,124.88 44.98,126.48 46.06,128.06 47.20,129.63 48.40,131.19 49.66,132.73 50.97,134.26 52.34,135.77 53.76,137.26 55.24,138.73 56.77,140.19 58.35,141.63 59.99,143.05 61.68,144.44 63.42,145.82 65.21,147.18 67.05,148.51 68.93,149.83 70.87,151.12 72.85,152.38 74.88,153.62 76.95,154.84 79.07,156.03 81.23,157.19 83.43,158.33 85.68,159.45 87.96,160.53 90.28,161.59 92.65,162.62 95.04,163.62 97.48,164.59 99.95,165.53 102.46,166.44 104.99,167.32 107.56,168.17 110.16,168.99 112.79,169.78 115.45,170.53 118.13,171.25 120.84,171.94 123.58,172.60 126.34,173.23 129.12,173.82 131.92,174.37 134.74,174.90 137.58,175.39 140.44,175.84 143.31,176.26 146.20,176.65 149.10,177.00 152.02,177.31 154.94,177.59 157.88,177.84 160.82,178.05 163.77,178.22 166.73,178.36 169.69,178.46 172.65,178.53 175.62,178.56 178.58,178.55 181.55,178.51 184.51,178.43 187.47,178.32 190.43,178.17 193.37,177.99 196.31,177.77 199.25,177.51 202.17,177.22 205.08,176.90 207.98,176.54 210.86,176.14 213.73,175.71 216.58,175.25 219.42,174.75 222.24,174.22 225.03,173.65 227.81,173.05 230.56,172.41 233.29,171.75 235.99,171.05 238.67,170.31 241.32,169.55 243.94,168.75 246.53,167.93 249.09,167.07 251.62,166.18 254.11,165.26 256.57,164.31 259.00,163.33 261.38,162.32 263.73,161.28 266.05,160.22 268.32,159.12 270.55,158.00 272.74,156.86 274.89,155.68 276.99,154.49 279.05,153.26 281.07,152.01 283.04,150.74 284.96,149.45 286.83,148.13 288.66,146.79 290.43,145.42 292.16,144.04 293.83,142.63 295.45,141.21 297.02,139.77 298.53,138.30 300.00,136.82 301.40,135.33 302.75,133.81 304.05,132.28 305.29,130.74 306.47,129.18 307.60,127.60 308.66,126.02 309.67,124.42 310.62,122.80 311.51,121.18 312.34,119.55 313.11,117.91 313.82,116.25 314.47,114.59 315.06,112.93 315.58,111.25 316.05,109.57 316.45,107.89 316.79,106.20 317.07,104.50 317.29,102.81 317.44,101.11 317.54,99.41 317.57,97.71 317.53,96.01 317.44,94.31 317.28,92.61 317.06,90.91 316.78,89.22 316.44,87.53 316.03,85.84 315.56,84.16 315.03,82.49 314.44,80.82 313.79,79.16 313.08,77.51 312.31,75.87 311.47,74.24 310.58,72.61 309.63,71.00 308.62,69.40 307.55,67.82 306.42,66.24 305.24,64.68 304.00,63.14 302.70,61.61 301.35,60.10 299.94,58.60 298.47,57.12 296.96,55.66 295.38,54.22 293.76,52.79 292.09,51.39 285.04,54.22 286.61,55.54 288.13,56.87 289.61,58.23 291.03,59.60 292.41,60.99 293.73,62.40 295.00,63.82 296.22,65.25 297.39,66.70 298.50,68.17 299.56,69.65 300.56,71.14 301.51,72.64 302.40,74.15 303.24,75.67 304.02,77.21 304.75,78.75 305.42,80.30 306.03,81.86 306.58,83.42 307.08,84.99 307.52,86.57 307.90,88.15 308.22,89.74 308.49,91.33 308.69,92.92 308.84,94.52 308.93,96.11 308.96,97.71 308.93,99.31 308.85,100.90 308.70,102.50 308.50,104.09 308.24,105.68 307.92,107.27 307.54,108.85 307.10,110.43 306.61,112.00 306.05,113.57 305.44,115.12 304.78,116.67 304.06,118.22 303.28,119.75 302.44,121.27 301.55,122.79 300.60,124.29 299.60,125.78 298.54,127.26 297.43,128.72 296.27,130.17 295.05,131.61 293.79,133.03 292.46,134.44 291.09,135.83 289.67,137.20 288.20,138.56 286.67,139.89 285.10,141.21 283.48,142.51 281.82,143.79 280.10,145.05 278.35,146.29 276.54,147.51 274.69,148.70 272.80,149.87 270.87,151.02 268.89,152.15 266.88,153.25 264.82,154.32 262.72,155.38 260.59,156.40 258.42,157.40 256.21,158.38 253.97,159.32 251.69,160.24 249.38,161.13 247.04,162.00 244.67,162.83 242.26,163.64 239.83,164.42 237.37,165.16 234.88,165.88 232.37,166.57 229.83,167.23 227.27,167.85 224.68,168.45 222.08,169.01 219.45,169.55 216.81,170.05 214.15,170.51 211.47,170.95 208.77,171.36 206.07,171.73 203.34,172.06 200.61,172.37 197.87,172.64 195.11,172.88 192.35,173.09 189.58,173.26 186.81,173.40 184.03,173.51 181.25,173.58 178.47,173.62 175.68,173.62 172.90,173.59 170.12,173.53 167.34,173.43 164.56,173.31 161.79,173.14 159.03,172.95 156.27,172.72 153.52,172.45 150.79,172.16 148.06,171.83 145.35,171.47 142.65,171.07 139.97,170.65 137.30,170.19 134.65,169.70 132.02,169.17 129.41,168.62 126.82,168.03 124.25,167.41 121.71,166.77 119.19,166.09 116.69,165.38 114.22,164.64 111.78,163.87 109.37,163.07 106.99,162.24 104.64,161.39 102.32,160.51 100.03,159.59 97.78,158.65 95.56,157.69 93.38,156.70 91.23,155.68 89.13,154.63 87.06,153.56 85.03,152.47 83.04,151.35 81.09,150.21 79.19,149.04 77.33,147.86 75.51,146.65 73.74,145.41 72.01,144.16 70.33,142.89 68.70,141.59 67.12,140.28 65.58,138.95 64.09,137.60 62.65,136.23 61.27,134.84 59.93,133.44 58.65,132.03 57.42,130.59 56.24,129.15 55.11,127.69 54.04,126.21 53.02,124.72 52.06,123.23 51.15,121.72 50.30,120.20 49.50,118.67 48.76,117.13 48.08,115.58 47.45,114.02 46.89,112.46 46.37,110.89 45.92,109.31 45.53,107.73 45.19,106.14 44.91,104.56 44.69,102.96 44.53,101.37 44.42,99.77 44.38,98.18 44.39,96.58 44.46,94.98 44.59,93.39 44.78,91.79 45.03,90.20 45.34,88.61 45.70,87.03 46.12,85.45 46.60,83.88 47.14,82.31 47.73,80.75 48.39,79.20 49.10,77.65 49.86,76.12 50.68,74.59 51.56,73.08 52.49,71.57 53.48,70.08 54.52,68.60 55.62,67.13 56.77,65.67" fill="#16a085" stroke="#16a085" stroke-width="0.3"/></svg></div>
<svg class="a" style="left:290px;top:275px" width="40" height="40" viewBox="0 0 40 40"><path d="M14,24.2V12" stroke="#b8b8ff" stroke-width="1.1"/><path d="M14,24.2L20.8,16.1" stroke="#9ee89e" stroke-width="0.6"/><path d="M14,24.2L28,27.5" stroke="#ff9a9a" stroke-width="0.7"/><text x="12.6" y="11" font-family="Liberation Sans" font-size="3.4" fill="#777">z</text><text x="20.4" y="15.8" font-family="Liberation Sans" font-size="3.4" fill="#777">y</text><text x="28.6" y="29.8" font-family="Liberation Sans" font-size="3.4" fill="#777">x</text></svg>
<div class="a" style="left:416.8px;top:326.6px;width:10px;height:10.8px;background:#dedede;border-radius:1.2px"></div><div class="a" style="left:430px;top:326.6px;width:21.3px;height:10.8px;background:#dedede;border-radius:1.2px"></div><div class="a" style="left:440.6px;top:327px;width:0.5px;height:10px;background:#d2d2d2"></div><svg class="a" style="left:270.90px;top:328.10px" width="7.40" height="7.40" viewBox="0 0 10 10"><path d="M5,0.8l3.8,2.1v4.2l-3.8,2.1l-3.8-2.1v-4.2z" fill="none" stroke="#6a6a6a" stroke-width="0.9"/><path d="M1.2,2.9l3.8,2.1l3.8-2.1M5,5v4.2" fill="none" stroke="#6a6a6a" stroke-width="0.8"/><path d="M2.6,6.4l2,1.6l-2,1.6M5,6.4l2,1.6l-2,1.6" fill="none" stroke="#1e1e1e" stroke-width="1.1"/></svg><svg class="a" style="left:281.80px;top:328.10px" width="7.40" height="7.40" viewBox="0 0 10 10"><path d="M5,0.8l3.8,2.1v4.2l-3.8,2.1l-3.8-2.1v-4.2z" fill="none" stroke="#5a5a5a" stroke-width="1"/><path d="M1.2,2.9l3.8,2.1l3.8-2.1M5,5v4.2" fill="none" stroke="#5a5a5a" stroke-width="0.9"/><path d="M3.5,6.2h3l-3,3.4h3z" fill="none" stroke="#333" stroke-width="0.8"/></svg><svg class="a" style="left:294.40px;top:328.10px" width="7.40" height="7.40" viewBox="0 0 10 10"><path d="M2.2,2.2h5.6v5.6h-5.6z" fill="none" stroke="#2e2e2e" stroke-width="1.1"/><path d="M0.8,0.8l2.2,2.2M9.2,0.8l-2.2,2.2M0.8,9.2l2.2-2.2M9.2,9.2l-2.2-2.2" stroke="#2e2e2e" stroke-width="1.1"/></svg><svg class="a" style="left:305.60px;top:328.10px" width="7.40" height="7.40" viewBox="0 0 10 10"><circle cx="4.2" cy="4.2" r="2.6" fill="none" stroke="#2e2e2e" stroke-width="1.3"/><path d="M6,6l3,3" stroke="#2e2e2e" stroke-width="1.5"/><path d="M2.8,4.2h2.8M4.2,2.8v2.8" stroke="#2e2e2e" stroke-width="0.7"/></svg><svg class="a" style="left:316.30px;top:328.10px" width="7.40" height="7.40" viewBox="0 0 10 10"><circle cx="4.2" cy="4.2" r="2.6" fill="none" stroke="#2e2e2e" stroke-width="1.3"/><path d="M6,6l3,3" stroke="#2e2e2e" stroke-width="1.5"/><path d="M2.8,4.2h2.8" stroke="#2e2e2e" stroke-width="0.7"/></svg><svg class="a" style="left:326.90px;top:328.10px" width="7.40" height="7.40" viewBox="0 0 10 10"><path d="M3.2,1.9A3.5,3.5 0 1 0 6.5,1.6" fill="none" stroke="#1e1e1e" stroke-width="1.4"/><path d="M1.2,0.6l3.6,0.4l-2,2.6z" fill="#1e1e1e"/></svg><svg class="a" style="left:339.60px;top:328.10px" width="7.40" height="7.40" viewBox="0 0 10 10"><circle cx="4.5" cy="5" r="3.4" fill="none" stroke="#555" stroke-width="0.9"/><path d="M1.1,5h6.3" stroke="#555" stroke-width="0.8"/><path d="M7.5,2.6l2.3,2.4l-2.3,2.4z" fill="#444"/></svg><svg class="a" style="left:350.50px;top:328.10px" width="7.40" height="7.40" viewBox="0 0 10 10"><circle cx="5" cy="5.4" r="3.4" fill="none" stroke="#666" stroke-width="0.9"/><path d="M1.6,5.4h6.8M5,2v6.8" stroke="#666" stroke-width="0.7"/><path d="M2.8,2.4l2.2-2l2.2,2z" fill="#555"/></svg><svg class="a" style="left:361.10px;top:328.10px" width="7.40" height="7.40" viewBox="0 0 10 10"><circle cx="5" cy="4.6" r="3.4" fill="none" stroke="#666" stroke-width="0.9"/><path d="M1.6,4.6h6.8M5,1.2v6.8" stroke="#666" stroke-width="0.7"/><path d="M2.8,7.6l2.2,2l2.2-2z" fill="#444"/></svg><svg class="a" style="left:372.20px;top:328.10px" width="7.40" height="7.40" viewBox="0 0 10 10"><circle cx="5.5" cy="5" r="3.4" fill="none" stroke="#555" stroke-width="0.9"/><path d="M2.6,5h6.3" stroke="#555" stroke-width="0.8"/><path d="M2.5,2.6l-2.3,2.4l2.3,2.4z" fill="#444"/></svg><svg class="a" style="left:383.30px;top:328.10px" width="7.40" height="7.40" viewBox="0 0 10 10"><path d="M5,0.8l3.8,2.1v4.2l-3.8,2.1l-3.8-2.1v-4.2z" fill="#ddd" stroke="#444" stroke-width="0.7"/><path d="M1.2,2.9l3.8,2.1v4.2l-3.8-2.1z" fill="#1e1e1e"/></svg><svg class="a" style="left:394.20px;top:328.10px" width="7.40" height="7.40" viewBox="0 0 10 10"><circle cx="5" cy="5" r="3.8" fill="#ccc" stroke="#555" stroke-width="0.6"/><path d="M5,5V1.2A3.8,3.8 0 0 1 8.3,6.9z" fill="#1e1e1e"/></svg><svg class="a" style="left:406.90px;top:328.10px" width="7.40" height="7.40" viewBox="0 0 10 10"><path d="M1.5,4.5h5v4.5h-5z" fill="none" stroke="#2e2e2e" stroke-width="1"/><path d="M1.5,4.5l2.5-2.5h5v4.5l-2.5,2.5M6.5,4.5l2.5-2.5" fill="none" stroke="#2e2e2e" stroke-width="0.8"/><path d="M7.5,0.5l2,2" stroke="#2e2e2e" stroke-width="1.2"/></svg><svg class="a" style="left:418.10px;top:328.10px" width="7.40" height="7.40" viewBox="0 0 10 10"><path d="M1.2,4.2h5v4.8h-5z" fill="#777" stroke="#333" stroke-width="1"/><path d="M1.2,4.2l2.8-2.8h5v4.8l-2.8,2.8z" fill="#999" stroke="#333" stroke-width="0.9"/><path d="M6.2,4.2l2.8-2.8" stroke="#333" stroke-width="0.8"/></svg><svg class="a" style="left:431.90px;top:328.10px" width="7.40" height="7.40" viewBox="0 0 10 10"><path d="M4,1v6l-3,2.6M4,7h5" fill="none" stroke="#555" stroke-width="0.8"/><path d="M5.4,3.5h3M5.4,5h2" stroke="#777" stroke-width="0.5"/></svg><svg class="a" style="left:442.30px;top:328.10px" width="7.40" height="7.40" viewBox="0 0 10 10"><path d="M3,0.8v6l-2.4,2.6M3,6.8h3" fill="none" stroke="#444" stroke-width="0.9"/><path d="M6,4v5h3.2v-3.2h-2" fill="none" stroke="#555" stroke-width="0.7"/></svg><svg class="a" style="left:452.90px;top:328.10px" width="7.40" height="7.40" viewBox="0 0 10 10"><path d="M2,2h6v6h-6z" fill="none" stroke="#2e2e2e" stroke-width="0.9"/><path d="M1,2h2M7,2h2M1,8h2M7,8h2M2,1v2M8,1v2M2,7v2M8,7v2" stroke="#2e2e2e" stroke-width="1.1"/></svg>
<div class="ui" style="left:269.6px;top:340.9px;color:#444">Console</div>
<svg class="a" style="left:325.60px;top:341.40px" width="5" height="5" viewBox="0 0 10 10"><rect x="1" y="1" width="8" height="8" rx="1.5" fill="#d4d4d4"/><path d="M3,3L7,7M7,3L3,7" stroke="#555" stroke-width="1.3"/></svg>
<div class="a" style="left:269px;top:347.2px;width:56.7px;height:77.8px;background:#fff"></div>
<div class="a" style="left:325.7px;top:347.2px;width:5.8px;height:77.8px;background:#f2f2f2"></div>
<div class="a" style="left:325.9px;top:352.6px;width:5.4px;height:59.6px;background:#dadada;border-radius:0.5px"></div>
<div class="a" style="left:327.40px;top:349.20px;width:0;height:0;border-left:1.2px solid transparent;border-right:1.2px solid transparent;border-bottom:1.4px solid #333"></div>
<div class="a" style="left:327.40px;top:421.60px;width:0;height:0;border-left:1.2px solid transparent;border-right:1.2px solid transparent;border-top:1.4px solid #333"></div>
<div class="con" style="top:348.00px">bytes: 14510672</div>
<div class="con" style="top:353.61px">Total rendering time:</div>
<div class="con" style="top:359.22px">0:00:05.664</div>
<div class="con" style="top:364.83px">  Top level object is a 3D</div>
<div class="con" style="top:370.44px">object:</div>
<div class="con" style="top:376.05px;left:272.6px">Simple:</div>
<div class="con" style="top:376.05px;left:298.0px">yes</div>
<div class="con" style="top:381.66px;left:272.6px">Vertices:</div>
<div class="con" style="top:381.66px;left:298.2px">3208</div>
<div class="con" style="top:387.27px;left:272.6px">Halfedges:</div>
<div class="con" style="top:387.27px;left:301.7px">9624</div>
<div class="con" style="top:392.88px;left:272.6px">Edges:</div>
<div class="con" style="top:392.88px;left:297.0px">4812</div>
<div class="con" style="top:398.49px;left:272.6px">Halffacets:</div>
<div class="con" style="top:398.49px;left:300.6px">3188</div>
<div class="con" style="top:404.10px;left:272.6px">Facets:</div>
<div class="con" style="top:404.10px;left:297.0px">1594</div>
<div class="con" style="top:409.71px;left:272.6px">Volumes:</div>
<div class="con" style="top:409.71px;left:303.8px">2</div>
<div class="con" style="top:415.32px">Rendering finished.</div>
<div class="ui" style="left:334px;top:341.3px;color:#444">Error-Log</div>
<svg class="a" style="left:623.00px;top:341.10px" width="5" height="5" viewBox="0 0 10 10"><rect x="1" y="1" width="8" height="8" rx="1.5" fill="#d4d4d4"/><path d="M3,3L7,7M7,3L3,7" stroke="#555" stroke-width="1.3"/></svg>
<div class="ui" style="left:335.6px;top:350.9px">Show</div>
<div class="a" style="left:335.6px;top:356.4px;width:3.2px;height:0.45px;background:#444"></div>
<div class="a" style="left:359.4px;top:348.9px;width:51.3px;height:9.2px;background:#f8f8f8;border:0.5px solid #cdcdcd;border-radius:1.2px;box-sizing:border-box"></div>
<div class="ui" style="left:361.5px;top:350.9px">All</div>
<div class="a" style="left:406.2px;top:353.2px;width:0;height:0;border-left:1.3px solid transparent;border-right:1.3px solid transparent;border-top:1.5px solid #555"></div>
<div class="a" style="left:335.6px;top:360.3px;width:289.4px;height:62px;background:#fff;border:0.5px solid #d2d2d2;box-sizing:border-box"></div>
<div class="a" style="left:335.8px;top:360.5px;width:289px;height:6.6px;background:#f6f6f6;border-bottom:0.5px solid #d8d8d8;box-sizing:border-box"></div>
<div class="a" style="left:361.0px;top:360.5px;width:0.5px;height:6.6px;background:#d0d0d0"></div>
<div class="a" style="left:427.5px;top:360.5px;width:0.5px;height:6.6px;background:#d0d0d0"></div>
<div class="a" style="left:453.5px;top:360.5px;width:0.5px;height:6.6px;background:#d0d0d0"></div>
<div class="ui" style="left:348.5px;top:360.7px;width:40px;margin-left:-20px;text-align:center">Group</div>
<div class="ui" style="left:394.5px;top:360.7px;width:40px;margin-left:-20px;text-align:center">File</div>
<div class="ui" style="left:440.5px;top:360.7px;width:40px;margin-left:-20px;text-align:center">Line</div>
<div class="ui" style="left:539.0px;top:360.7px;width:40px;margin-left:-20px;text-align:center">Info</div>
<div class="a" style="left:0;top:425px;width:628px;height:8px;background:#efefef"></div>
<div class="ui" style="left:1px;top:426.5px">Viewport: translate = [ 0.45 0.81 0.78 ], rotate = [ 55.00 0.00 25.00 ], distance = 155.56, fov = 22.50 (1100x814)</div>
<div class="ui" style="left:582.6px;top:426.5px">OpenSCAD 2021.01</div>
</div></body></html>
